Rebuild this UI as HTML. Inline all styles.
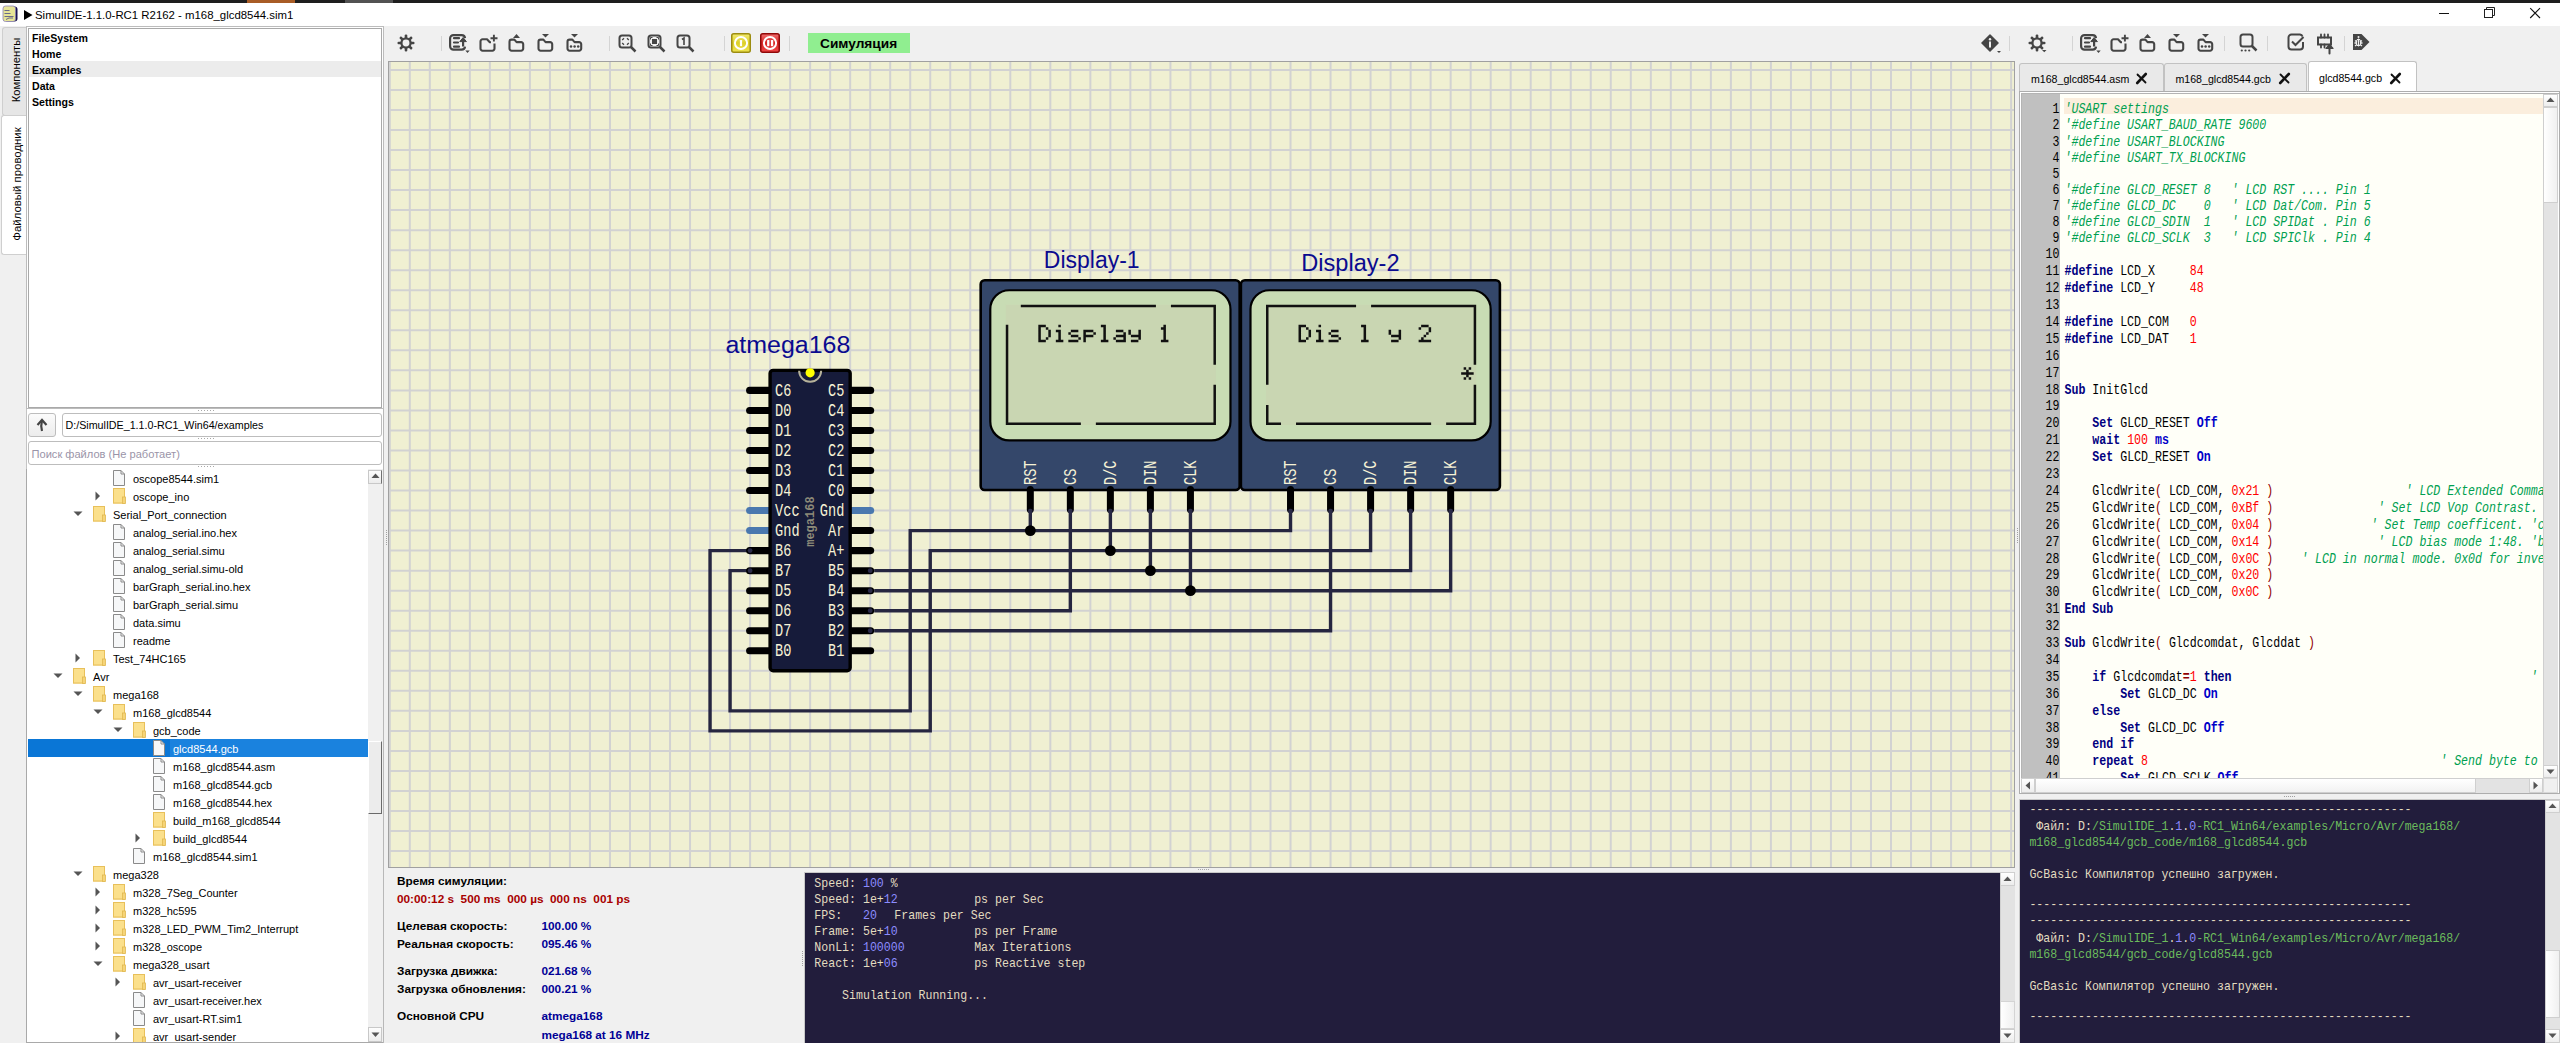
<!DOCTYPE html><html><head><meta charset="utf-8"><title>SimulIDE</title><style>html,body{margin:0;padding:0;width:2560px;height:1043px;overflow:hidden;background:#f0f0f0}body{position:relative}</style></head><body><div style="position:absolute;left:0px;top:0px;width:2560px;height:1043px;background:#f0f0f0"></div>
<div style="position:absolute;left:0px;top:0px;width:2560px;height:3px;background:#1e1e1e"></div>
<div style="position:absolute;left:247px;top:0px;width:48px;height:3px;background:#a85c26"></div>
<div style="position:absolute;left:345px;top:0px;width:48px;height:3px;background:#525252"></div>
<div style="position:absolute;left:0px;top:3px;width:2560px;height:23px;background:#ffffff"></div>
<svg style="position:absolute;left:2px;top:5px" width="17" height="18" viewBox="0 0 17 18"><rect x="3" y="1.5" width="12.5" height="15" rx="3" fill="#1a1450"/><rect x="1" y="1" width="12.5" height="15.5" rx="2.5" fill="#e6e496" stroke="#8a82b8" stroke-width="0.8"/><path d="M2.5 5.5h5M2.5 8.5h6M2.5 11.5h9M4 14.5l3-1.5h4" stroke="#6a6a8a" stroke-width="1" fill="none"/></svg>
<svg style="position:absolute;left:24px;top:10px" width="9" height="11"><path d="M0 0L8.5 5L0 10Z" fill="#000"/></svg>
<div style="position:absolute;left:35px;top:7.80px;height:15px;line-height:15px;font-family:'Liberation Sans', sans-serif;font-size:11.4px;font-weight:400;color:#000;white-space:pre;">SimulIDE-1.1.0-RC1 R2162 - m168_glcd8544.sim1</div>
<svg style="position:absolute;left:2430px;top:6px" width="120" height="16"><path d="M9 7.5h10" stroke="#111" stroke-width="1"/><rect x="54.5" y="3.5" width="8" height="8" fill="none" stroke="#222" stroke-width="1"/><path d="M56.5 3.5v-2h8v8h-2" fill="none" stroke="#222" stroke-width="1"/><path d="M100.2 2.2l9.8 9.8M110 2.2l-9.8 9.8" stroke="#111" stroke-width="1.1"/></svg>
<div style="position:absolute;left:0px;top:26px;width:27px;height:1017px;background:#f0f0f0"></div>
<div style="position:absolute;left:26px;top:26px;width:1px;height:1017px;background:#c4c4c4"></div>
<div style="position:absolute;left:2px;top:27px;width:24px;height:87px;background:#e6e6e6;border:1px solid #cfcfcf;border-right:none;border-radius:3px 0 0 3px"></div>
<div style="position:absolute;left:16px;top:70px;transform:translate(-50%,-50%) rotate(-90deg);font-family:'Liberation Sans', sans-serif;font-size:11.2px;color:#000;white-space:pre">Компоненты</div>
<div style="position:absolute;left:1px;top:115px;width:26px;height:138px;background:#ffffff;border:1px solid #cfcfcf;border-right:none;border-radius:3px 0 0 3px"></div>
<div style="position:absolute;left:17px;top:184px;transform:translate(-50%,-50%) rotate(-90deg);font-family:'Liberation Sans', sans-serif;font-size:11.4px;color:#000;white-space:pre">Файловый проводник</div>
<div style="position:absolute;left:27px;top:26px;width:357px;height:1017px;background:#fff;border-right:1px solid #b8b8b8;box-sizing:border-box"></div>
<div style="position:absolute;left:26px;top:26px;width:358px;height:383px;background:#fff;border:1px solid #bcbcbc;box-sizing:border-box"></div>
<div style="position:absolute;left:28px;top:28px;width:354px;height:380px;background:#fff;border:1px solid #a9a9a9;box-sizing:border-box"></div>
<div style="position:absolute;left:29px;top:61px;width:352px;height:16px;background:#ececec"></div>
<div style="position:absolute;left:32px;top:30.60px;height:14px;line-height:14px;font-family:'Liberation Sans', sans-serif;font-size:10.6px;font-weight:700;color:#000;white-space:pre;">FileSystem</div>
<div style="position:absolute;left:32px;top:46.60px;height:14px;line-height:14px;font-family:'Liberation Sans', sans-serif;font-size:10.6px;font-weight:700;color:#000;white-space:pre;">Home</div>
<div style="position:absolute;left:32px;top:62.60px;height:14px;line-height:14px;font-family:'Liberation Sans', sans-serif;font-size:10.6px;font-weight:700;color:#000;white-space:pre;">Examples</div>
<div style="position:absolute;left:32px;top:78.60px;height:14px;line-height:14px;font-family:'Liberation Sans', sans-serif;font-size:10.6px;font-weight:700;color:#000;white-space:pre;">Data</div>
<div style="position:absolute;left:32px;top:94.60px;height:14px;line-height:14px;font-family:'Liberation Sans', sans-serif;font-size:10.6px;font-weight:700;color:#000;white-space:pre;">Settings</div>
<div style="position:absolute;left:198px;top:410px;width:1px;height:1px;background:#a8a8a8"></div>
<div style="position:absolute;left:201px;top:410px;width:1px;height:1px;background:#a8a8a8"></div>
<div style="position:absolute;left:204px;top:410px;width:1px;height:1px;background:#a8a8a8"></div>
<div style="position:absolute;left:207px;top:410px;width:1px;height:1px;background:#a8a8a8"></div>
<div style="position:absolute;left:210px;top:410px;width:1px;height:1px;background:#a8a8a8"></div>
<div style="position:absolute;left:213px;top:410px;width:1px;height:1px;background:#a8a8a8"></div>
<div style="position:absolute;left:198px;top:438px;width:1px;height:1px;background:#a8a8a8"></div>
<div style="position:absolute;left:201px;top:438px;width:1px;height:1px;background:#a8a8a8"></div>
<div style="position:absolute;left:204px;top:438px;width:1px;height:1px;background:#a8a8a8"></div>
<div style="position:absolute;left:207px;top:438px;width:1px;height:1px;background:#a8a8a8"></div>
<div style="position:absolute;left:210px;top:438px;width:1px;height:1px;background:#a8a8a8"></div>
<div style="position:absolute;left:213px;top:438px;width:1px;height:1px;background:#a8a8a8"></div>
<div style="position:absolute;left:198px;top:466px;width:1px;height:1px;background:#a8a8a8"></div>
<div style="position:absolute;left:201px;top:466px;width:1px;height:1px;background:#a8a8a8"></div>
<div style="position:absolute;left:204px;top:466px;width:1px;height:1px;background:#a8a8a8"></div>
<div style="position:absolute;left:207px;top:466px;width:1px;height:1px;background:#a8a8a8"></div>
<div style="position:absolute;left:210px;top:466px;width:1px;height:1px;background:#a8a8a8"></div>
<div style="position:absolute;left:213px;top:466px;width:1px;height:1px;background:#a8a8a8"></div>
<div style="position:absolute;left:28px;top:413px;width:28px;height:24px;background:linear-gradient(#fbfbfb,#ececec);border:1px solid #bdbdbd;box-sizing:border-box;border-radius:3px"></div>
<svg style="position:absolute;left:35px;top:417px" width="14" height="16"><path d="M7 14 Q5.5 9 7 3.5" stroke="#444" stroke-width="2.2" fill="none"/><path d="M2.5 8L7 3l4.5 5" stroke="#444" stroke-width="2.2" fill="none"/></svg>
<div style="position:absolute;left:62px;top:413px;width:320px;height:24px;background:#fff;border:1px solid #bdbdbd;box-sizing:border-box;border-radius:3px"></div>
<div style="position:absolute;left:65.5px;top:418.30px;height:14px;line-height:14px;font-family:'Liberation Sans', sans-serif;font-size:10.7px;font-weight:400;color:#000;white-space:pre;">D:/SimulIDE_1.1.0-RC1_Win64/examples</div>
<div style="position:absolute;left:28px;top:441px;width:354px;height:24px;background:#fff;border:1px solid #bdbdbd;box-sizing:border-box;border-radius:3px"></div>
<div style="position:absolute;left:31.5px;top:446.50px;height:14px;line-height:14px;font-family:'Liberation Sans', sans-serif;font-size:11.1px;font-weight:400;color:#9a94a8;white-space:pre;">Поиск файлов (Не работает)</div>
<div style="position:absolute;left:26px;top:469px;width:357px;height:574px;background:#fff;border-left:1px solid #a9a9a9;border-bottom:1px solid #a9a9a9;box-sizing:border-box"></div>
<div style="position:absolute;left:27px;top:469px;width:341px;height:573px;overflow:hidden">
<svg style="position:absolute;left:86px;top:1.0px" width="12" height="16"><path d="M0.5 0.5H8L11.5 4V15.5H0.5Z" fill="#f6f7f8" stroke="#8a8a8a" stroke-width="1"/><path d="M8 0.5V4H11.5" fill="none" stroke="#8a8a8a" stroke-width="1"/></svg>
<div style="position:absolute;left:106px;top:3.10px;height:14px;line-height:14px;font-family:'Liberation Sans', sans-serif;font-size:11px;color:#000;white-space:pre">oscope8544.sim1</div>
<svg style="position:absolute;left:68px;top:22.0px" width="6" height="10"><path d="M0.5 0.5L5 5L0.5 9.5Z" fill="#555"/></svg>
<svg style="position:absolute;left:86px;top:19.0px" width="14" height="16"><rect x="0" y="0" width="12" height="15.5" fill="#f2d06a"/><rect x="0.5" y="0.5" width="11" height="14.5" fill="#fbe08c" stroke="#e8c05a" stroke-width="1"/><rect x="9.5" y="9" width="3" height="6.5" fill="#f6d478" stroke="#e0b850" stroke-width="0.8"/></svg>
<div style="position:absolute;left:106px;top:21.10px;height:14px;line-height:14px;font-family:'Liberation Sans', sans-serif;font-size:11px;color:#000;white-space:pre">oscope_ino</div>
<svg style="position:absolute;left:46px;top:42.0px" width="10" height="6"><path d="M0.5 0.5L9.5 0.5L5 5Z" fill="#555"/></svg>
<svg style="position:absolute;left:66px;top:37.0px" width="14" height="16"><rect x="0" y="0" width="12" height="15.5" fill="#f2d06a"/><rect x="0.5" y="0.5" width="11" height="14.5" fill="#fbe08c" stroke="#e8c05a" stroke-width="1"/><rect x="9.5" y="9" width="3" height="6.5" fill="#f6d478" stroke="#e0b850" stroke-width="0.8"/></svg>
<div style="position:absolute;left:86px;top:39.10px;height:14px;line-height:14px;font-family:'Liberation Sans', sans-serif;font-size:11px;color:#000;white-space:pre">Serial_Port_connection</div>
<svg style="position:absolute;left:86px;top:55.0px" width="12" height="16"><path d="M0.5 0.5H8L11.5 4V15.5H0.5Z" fill="#f6f7f8" stroke="#8a8a8a" stroke-width="1"/><path d="M8 0.5V4H11.5" fill="none" stroke="#8a8a8a" stroke-width="1"/></svg>
<div style="position:absolute;left:106px;top:57.10px;height:14px;line-height:14px;font-family:'Liberation Sans', sans-serif;font-size:11px;color:#000;white-space:pre">analog_serial.ino.hex</div>
<svg style="position:absolute;left:86px;top:73.0px" width="12" height="16"><path d="M0.5 0.5H8L11.5 4V15.5H0.5Z" fill="#f6f7f8" stroke="#8a8a8a" stroke-width="1"/><path d="M8 0.5V4H11.5" fill="none" stroke="#8a8a8a" stroke-width="1"/></svg>
<div style="position:absolute;left:106px;top:75.10px;height:14px;line-height:14px;font-family:'Liberation Sans', sans-serif;font-size:11px;color:#000;white-space:pre">analog_serial.simu</div>
<svg style="position:absolute;left:86px;top:91.0px" width="12" height="16"><path d="M0.5 0.5H8L11.5 4V15.5H0.5Z" fill="#f6f7f8" stroke="#8a8a8a" stroke-width="1"/><path d="M8 0.5V4H11.5" fill="none" stroke="#8a8a8a" stroke-width="1"/></svg>
<div style="position:absolute;left:106px;top:93.10px;height:14px;line-height:14px;font-family:'Liberation Sans', sans-serif;font-size:11px;color:#000;white-space:pre">analog_serial.simu-old</div>
<svg style="position:absolute;left:86px;top:109.0px" width="12" height="16"><path d="M0.5 0.5H8L11.5 4V15.5H0.5Z" fill="#f6f7f8" stroke="#8a8a8a" stroke-width="1"/><path d="M8 0.5V4H11.5" fill="none" stroke="#8a8a8a" stroke-width="1"/></svg>
<div style="position:absolute;left:106px;top:111.10px;height:14px;line-height:14px;font-family:'Liberation Sans', sans-serif;font-size:11px;color:#000;white-space:pre">barGraph_serial.ino.hex</div>
<svg style="position:absolute;left:86px;top:127.0px" width="12" height="16"><path d="M0.5 0.5H8L11.5 4V15.5H0.5Z" fill="#f6f7f8" stroke="#8a8a8a" stroke-width="1"/><path d="M8 0.5V4H11.5" fill="none" stroke="#8a8a8a" stroke-width="1"/></svg>
<div style="position:absolute;left:106px;top:129.10px;height:14px;line-height:14px;font-family:'Liberation Sans', sans-serif;font-size:11px;color:#000;white-space:pre">barGraph_serial.simu</div>
<svg style="position:absolute;left:86px;top:145.0px" width="12" height="16"><path d="M0.5 0.5H8L11.5 4V15.5H0.5Z" fill="#f6f7f8" stroke="#8a8a8a" stroke-width="1"/><path d="M8 0.5V4H11.5" fill="none" stroke="#8a8a8a" stroke-width="1"/></svg>
<div style="position:absolute;left:106px;top:147.10px;height:14px;line-height:14px;font-family:'Liberation Sans', sans-serif;font-size:11px;color:#000;white-space:pre">data.simu</div>
<svg style="position:absolute;left:86px;top:163.0px" width="12" height="16"><path d="M0.5 0.5H8L11.5 4V15.5H0.5Z" fill="#f6f7f8" stroke="#8a8a8a" stroke-width="1"/><path d="M8 0.5V4H11.5" fill="none" stroke="#8a8a8a" stroke-width="1"/></svg>
<div style="position:absolute;left:106px;top:165.10px;height:14px;line-height:14px;font-family:'Liberation Sans', sans-serif;font-size:11px;color:#000;white-space:pre">readme</div>
<svg style="position:absolute;left:48px;top:184.0px" width="6" height="10"><path d="M0.5 0.5L5 5L0.5 9.5Z" fill="#555"/></svg>
<svg style="position:absolute;left:66px;top:181.0px" width="14" height="16"><rect x="0" y="0" width="12" height="15.5" fill="#f2d06a"/><rect x="0.5" y="0.5" width="11" height="14.5" fill="#fbe08c" stroke="#e8c05a" stroke-width="1"/><rect x="9.5" y="9" width="3" height="6.5" fill="#f6d478" stroke="#e0b850" stroke-width="0.8"/></svg>
<div style="position:absolute;left:86px;top:183.10px;height:14px;line-height:14px;font-family:'Liberation Sans', sans-serif;font-size:11px;color:#000;white-space:pre">Test_74HC165</div>
<svg style="position:absolute;left:26px;top:204.0px" width="10" height="6"><path d="M0.5 0.5L9.5 0.5L5 5Z" fill="#555"/></svg>
<svg style="position:absolute;left:46px;top:199.0px" width="14" height="16"><rect x="0" y="0" width="12" height="15.5" fill="#f2d06a"/><rect x="0.5" y="0.5" width="11" height="14.5" fill="#fbe08c" stroke="#e8c05a" stroke-width="1"/><rect x="9.5" y="9" width="3" height="6.5" fill="#f6d478" stroke="#e0b850" stroke-width="0.8"/></svg>
<div style="position:absolute;left:66px;top:201.10px;height:14px;line-height:14px;font-family:'Liberation Sans', sans-serif;font-size:11px;color:#000;white-space:pre">Avr</div>
<svg style="position:absolute;left:46px;top:222.0px" width="10" height="6"><path d="M0.5 0.5L9.5 0.5L5 5Z" fill="#555"/></svg>
<svg style="position:absolute;left:66px;top:217.0px" width="14" height="16"><rect x="0" y="0" width="12" height="15.5" fill="#f2d06a"/><rect x="0.5" y="0.5" width="11" height="14.5" fill="#fbe08c" stroke="#e8c05a" stroke-width="1"/><rect x="9.5" y="9" width="3" height="6.5" fill="#f6d478" stroke="#e0b850" stroke-width="0.8"/></svg>
<div style="position:absolute;left:86px;top:219.10px;height:14px;line-height:14px;font-family:'Liberation Sans', sans-serif;font-size:11px;color:#000;white-space:pre">mega168</div>
<svg style="position:absolute;left:66px;top:240.0px" width="10" height="6"><path d="M0.5 0.5L9.5 0.5L5 5Z" fill="#555"/></svg>
<svg style="position:absolute;left:86px;top:235.0px" width="14" height="16"><rect x="0" y="0" width="12" height="15.5" fill="#f2d06a"/><rect x="0.5" y="0.5" width="11" height="14.5" fill="#fbe08c" stroke="#e8c05a" stroke-width="1"/><rect x="9.5" y="9" width="3" height="6.5" fill="#f6d478" stroke="#e0b850" stroke-width="0.8"/></svg>
<div style="position:absolute;left:106px;top:237.10px;height:14px;line-height:14px;font-family:'Liberation Sans', sans-serif;font-size:11px;color:#000;white-space:pre">m168_glcd8544</div>
<svg style="position:absolute;left:86px;top:258.0px" width="10" height="6"><path d="M0.5 0.5L9.5 0.5L5 5Z" fill="#555"/></svg>
<svg style="position:absolute;left:106px;top:253.0px" width="14" height="16"><rect x="0" y="0" width="12" height="15.5" fill="#f2d06a"/><rect x="0.5" y="0.5" width="11" height="14.5" fill="#fbe08c" stroke="#e8c05a" stroke-width="1"/><rect x="9.5" y="9" width="3" height="6.5" fill="#f6d478" stroke="#e0b850" stroke-width="0.8"/></svg>
<div style="position:absolute;left:126px;top:255.10px;height:14px;line-height:14px;font-family:'Liberation Sans', sans-serif;font-size:11px;color:#000;white-space:pre">gcb_code</div>
<div style="position:absolute;left:1px;top:270.0px;width:340px;height:18px;background:#0a76d6"></div>
<div style="position:absolute;left:143px;top:270.0px;width:198px;height:18px;background:#1a82de"></div>
<svg style="position:absolute;left:126px;top:271.0px" width="12" height="16"><path d="M0.5 0.5H8L11.5 4V15.5H0.5Z" fill="#f6f7f8" stroke="#8a8a8a" stroke-width="1"/><path d="M8 0.5V4H11.5" fill="none" stroke="#8a8a8a" stroke-width="1"/></svg>
<div style="position:absolute;left:146px;top:273.10px;height:14px;line-height:14px;font-family:'Liberation Sans', sans-serif;font-size:11px;color:#fff;white-space:pre">glcd8544.gcb</div>
<svg style="position:absolute;left:126px;top:289.0px" width="12" height="16"><path d="M0.5 0.5H8L11.5 4V15.5H0.5Z" fill="#f6f7f8" stroke="#8a8a8a" stroke-width="1"/><path d="M8 0.5V4H11.5" fill="none" stroke="#8a8a8a" stroke-width="1"/></svg>
<div style="position:absolute;left:146px;top:291.10px;height:14px;line-height:14px;font-family:'Liberation Sans', sans-serif;font-size:11px;color:#000;white-space:pre">m168_glcd8544.asm</div>
<svg style="position:absolute;left:126px;top:307.0px" width="12" height="16"><path d="M0.5 0.5H8L11.5 4V15.5H0.5Z" fill="#f6f7f8" stroke="#8a8a8a" stroke-width="1"/><path d="M8 0.5V4H11.5" fill="none" stroke="#8a8a8a" stroke-width="1"/></svg>
<div style="position:absolute;left:146px;top:309.10px;height:14px;line-height:14px;font-family:'Liberation Sans', sans-serif;font-size:11px;color:#000;white-space:pre">m168_glcd8544.gcb</div>
<svg style="position:absolute;left:126px;top:325.0px" width="12" height="16"><path d="M0.5 0.5H8L11.5 4V15.5H0.5Z" fill="#f6f7f8" stroke="#8a8a8a" stroke-width="1"/><path d="M8 0.5V4H11.5" fill="none" stroke="#8a8a8a" stroke-width="1"/></svg>
<div style="position:absolute;left:146px;top:327.10px;height:14px;line-height:14px;font-family:'Liberation Sans', sans-serif;font-size:11px;color:#000;white-space:pre">m168_glcd8544.hex</div>
<svg style="position:absolute;left:126px;top:343.0px" width="14" height="16"><rect x="0" y="0" width="12" height="15.5" fill="#f2d06a"/><rect x="0.5" y="0.5" width="11" height="14.5" fill="#fbe08c" stroke="#e8c05a" stroke-width="1"/><rect x="9.5" y="9" width="3" height="6.5" fill="#f6d478" stroke="#e0b850" stroke-width="0.8"/></svg>
<div style="position:absolute;left:146px;top:345.10px;height:14px;line-height:14px;font-family:'Liberation Sans', sans-serif;font-size:11px;color:#000;white-space:pre">build_m168_glcd8544</div>
<svg style="position:absolute;left:108px;top:364.0px" width="6" height="10"><path d="M0.5 0.5L5 5L0.5 9.5Z" fill="#555"/></svg>
<svg style="position:absolute;left:126px;top:361.0px" width="14" height="16"><rect x="0" y="0" width="12" height="15.5" fill="#f2d06a"/><rect x="0.5" y="0.5" width="11" height="14.5" fill="#fbe08c" stroke="#e8c05a" stroke-width="1"/><rect x="9.5" y="9" width="3" height="6.5" fill="#f6d478" stroke="#e0b850" stroke-width="0.8"/></svg>
<div style="position:absolute;left:146px;top:363.10px;height:14px;line-height:14px;font-family:'Liberation Sans', sans-serif;font-size:11px;color:#000;white-space:pre">build_glcd8544</div>
<svg style="position:absolute;left:106px;top:379.0px" width="12" height="16"><path d="M0.5 0.5H8L11.5 4V15.5H0.5Z" fill="#f6f7f8" stroke="#8a8a8a" stroke-width="1"/><path d="M8 0.5V4H11.5" fill="none" stroke="#8a8a8a" stroke-width="1"/></svg>
<div style="position:absolute;left:126px;top:381.10px;height:14px;line-height:14px;font-family:'Liberation Sans', sans-serif;font-size:11px;color:#000;white-space:pre">m168_glcd8544.sim1</div>
<svg style="position:absolute;left:46px;top:402.0px" width="10" height="6"><path d="M0.5 0.5L9.5 0.5L5 5Z" fill="#555"/></svg>
<svg style="position:absolute;left:66px;top:397.0px" width="14" height="16"><rect x="0" y="0" width="12" height="15.5" fill="#f2d06a"/><rect x="0.5" y="0.5" width="11" height="14.5" fill="#fbe08c" stroke="#e8c05a" stroke-width="1"/><rect x="9.5" y="9" width="3" height="6.5" fill="#f6d478" stroke="#e0b850" stroke-width="0.8"/></svg>
<div style="position:absolute;left:86px;top:399.10px;height:14px;line-height:14px;font-family:'Liberation Sans', sans-serif;font-size:11px;color:#000;white-space:pre">mega328</div>
<svg style="position:absolute;left:68px;top:418.0px" width="6" height="10"><path d="M0.5 0.5L5 5L0.5 9.5Z" fill="#555"/></svg>
<svg style="position:absolute;left:86px;top:415.0px" width="14" height="16"><rect x="0" y="0" width="12" height="15.5" fill="#f2d06a"/><rect x="0.5" y="0.5" width="11" height="14.5" fill="#fbe08c" stroke="#e8c05a" stroke-width="1"/><rect x="9.5" y="9" width="3" height="6.5" fill="#f6d478" stroke="#e0b850" stroke-width="0.8"/></svg>
<div style="position:absolute;left:106px;top:417.10px;height:14px;line-height:14px;font-family:'Liberation Sans', sans-serif;font-size:11px;color:#000;white-space:pre">m328_7Seg_Counter</div>
<svg style="position:absolute;left:68px;top:436.0px" width="6" height="10"><path d="M0.5 0.5L5 5L0.5 9.5Z" fill="#555"/></svg>
<svg style="position:absolute;left:86px;top:433.0px" width="14" height="16"><rect x="0" y="0" width="12" height="15.5" fill="#f2d06a"/><rect x="0.5" y="0.5" width="11" height="14.5" fill="#fbe08c" stroke="#e8c05a" stroke-width="1"/><rect x="9.5" y="9" width="3" height="6.5" fill="#f6d478" stroke="#e0b850" stroke-width="0.8"/></svg>
<div style="position:absolute;left:106px;top:435.10px;height:14px;line-height:14px;font-family:'Liberation Sans', sans-serif;font-size:11px;color:#000;white-space:pre">m328_hc595</div>
<svg style="position:absolute;left:68px;top:454.0px" width="6" height="10"><path d="M0.5 0.5L5 5L0.5 9.5Z" fill="#555"/></svg>
<svg style="position:absolute;left:86px;top:451.0px" width="14" height="16"><rect x="0" y="0" width="12" height="15.5" fill="#f2d06a"/><rect x="0.5" y="0.5" width="11" height="14.5" fill="#fbe08c" stroke="#e8c05a" stroke-width="1"/><rect x="9.5" y="9" width="3" height="6.5" fill="#f6d478" stroke="#e0b850" stroke-width="0.8"/></svg>
<div style="position:absolute;left:106px;top:453.10px;height:14px;line-height:14px;font-family:'Liberation Sans', sans-serif;font-size:11px;color:#000;white-space:pre">m328_LED_PWM_Tim2_Interrupt</div>
<svg style="position:absolute;left:68px;top:472.0px" width="6" height="10"><path d="M0.5 0.5L5 5L0.5 9.5Z" fill="#555"/></svg>
<svg style="position:absolute;left:86px;top:469.0px" width="14" height="16"><rect x="0" y="0" width="12" height="15.5" fill="#f2d06a"/><rect x="0.5" y="0.5" width="11" height="14.5" fill="#fbe08c" stroke="#e8c05a" stroke-width="1"/><rect x="9.5" y="9" width="3" height="6.5" fill="#f6d478" stroke="#e0b850" stroke-width="0.8"/></svg>
<div style="position:absolute;left:106px;top:471.10px;height:14px;line-height:14px;font-family:'Liberation Sans', sans-serif;font-size:11px;color:#000;white-space:pre">m328_oscope</div>
<svg style="position:absolute;left:66px;top:492.0px" width="10" height="6"><path d="M0.5 0.5L9.5 0.5L5 5Z" fill="#555"/></svg>
<svg style="position:absolute;left:86px;top:487.0px" width="14" height="16"><rect x="0" y="0" width="12" height="15.5" fill="#f2d06a"/><rect x="0.5" y="0.5" width="11" height="14.5" fill="#fbe08c" stroke="#e8c05a" stroke-width="1"/><rect x="9.5" y="9" width="3" height="6.5" fill="#f6d478" stroke="#e0b850" stroke-width="0.8"/></svg>
<div style="position:absolute;left:106px;top:489.10px;height:14px;line-height:14px;font-family:'Liberation Sans', sans-serif;font-size:11px;color:#000;white-space:pre">mega328_usart</div>
<svg style="position:absolute;left:88px;top:508.0px" width="6" height="10"><path d="M0.5 0.5L5 5L0.5 9.5Z" fill="#555"/></svg>
<svg style="position:absolute;left:106px;top:505.0px" width="14" height="16"><rect x="0" y="0" width="12" height="15.5" fill="#f2d06a"/><rect x="0.5" y="0.5" width="11" height="14.5" fill="#fbe08c" stroke="#e8c05a" stroke-width="1"/><rect x="9.5" y="9" width="3" height="6.5" fill="#f6d478" stroke="#e0b850" stroke-width="0.8"/></svg>
<div style="position:absolute;left:126px;top:507.10px;height:14px;line-height:14px;font-family:'Liberation Sans', sans-serif;font-size:11px;color:#000;white-space:pre">avr_usart-receiver</div>
<svg style="position:absolute;left:106px;top:523.0px" width="12" height="16"><path d="M0.5 0.5H8L11.5 4V15.5H0.5Z" fill="#f6f7f8" stroke="#8a8a8a" stroke-width="1"/><path d="M8 0.5V4H11.5" fill="none" stroke="#8a8a8a" stroke-width="1"/></svg>
<div style="position:absolute;left:126px;top:525.10px;height:14px;line-height:14px;font-family:'Liberation Sans', sans-serif;font-size:11px;color:#000;white-space:pre">avr_usart-receiver.hex</div>
<svg style="position:absolute;left:106px;top:541.0px" width="12" height="16"><path d="M0.5 0.5H8L11.5 4V15.5H0.5Z" fill="#f6f7f8" stroke="#8a8a8a" stroke-width="1"/><path d="M8 0.5V4H11.5" fill="none" stroke="#8a8a8a" stroke-width="1"/></svg>
<div style="position:absolute;left:126px;top:543.10px;height:14px;line-height:14px;font-family:'Liberation Sans', sans-serif;font-size:11px;color:#000;white-space:pre">avr_usart-RT.sim1</div>
<svg style="position:absolute;left:88px;top:562.0px" width="6" height="10"><path d="M0.5 0.5L5 5L0.5 9.5Z" fill="#555"/></svg>
<svg style="position:absolute;left:106px;top:559.0px" width="14" height="16"><rect x="0" y="0" width="12" height="15.5" fill="#f2d06a"/><rect x="0.5" y="0.5" width="11" height="14.5" fill="#fbe08c" stroke="#e8c05a" stroke-width="1"/><rect x="9.5" y="9" width="3" height="6.5" fill="#f6d478" stroke="#e0b850" stroke-width="0.8"/></svg>
<div style="position:absolute;left:126px;top:561.10px;height:14px;line-height:14px;font-family:'Liberation Sans', sans-serif;font-size:11px;color:#000;white-space:pre">avr_usart-sender</div>
</div>
<div style="position:absolute;left:368px;top:469px;width:15px;height:573px;background:#f0f0f0"></div>
<div style="position:absolute;left:368px;top:470px;width:14px;height:14px;background:linear-gradient(#fdfdfd,#ececec);border:1px solid #c8c8c8;border-right-color:#707070;box-sizing:border-box"></div>
<svg style="position:absolute;left:371px;top:473px" width="9" height="6"><path d="M0.5 5L4.5 0.5L8.5 5Z" fill="#555"/></svg>
<div style="position:absolute;left:368px;top:741px;width:14px;height:73px;background:#ececec;border-top:1px solid #fff;border-left:1px solid #fff;border-right:1px solid #6a6a6a;border-bottom:1px solid #6a6a6a;box-sizing:border-box"></div>
<div style="position:absolute;left:368px;top:1027px;width:14px;height:15px;background:linear-gradient(#fdfdfd,#ececec);border:1px solid #c8c8c8;box-sizing:border-box"></div>
<svg style="position:absolute;left:371px;top:1032px" width="9" height="6"><path d="M0.5 0.5L4.5 5L8.5 0.5Z" fill="#555"/></svg>
<div style="position:absolute;left:384px;top:26px;width:3px;height:1017px;background:#f0f0f0"></div>
<svg style="position:absolute;left:396.4px;top:33.2px" width="21" height="21" viewBox="0 0 21 21"><g transform="translate(10,10)"><rect x="-1.3" y="-8.5" width="2.6" height="4.2" rx="1.1" fill="#454545" transform="rotate(0)"/><rect x="-1.3" y="-8.5" width="2.6" height="4.2" rx="1.1" fill="#454545" transform="rotate(45)"/><rect x="-1.3" y="-8.5" width="2.6" height="4.2" rx="1.1" fill="#454545" transform="rotate(90)"/><rect x="-1.3" y="-8.5" width="2.6" height="4.2" rx="1.1" fill="#454545" transform="rotate(135)"/><rect x="-1.3" y="-8.5" width="2.6" height="4.2" rx="1.1" fill="#454545" transform="rotate(180)"/><rect x="-1.3" y="-8.5" width="2.6" height="4.2" rx="1.1" fill="#454545" transform="rotate(225)"/><rect x="-1.3" y="-8.5" width="2.6" height="4.2" rx="1.1" fill="#454545" transform="rotate(270)"/><rect x="-1.3" y="-8.5" width="2.6" height="4.2" rx="1.1" fill="#454545" transform="rotate(315)"/><circle r="4.6" fill="none" stroke="#454545" stroke-width="2.3"/></g></svg>
<div style="position:absolute;left:441px;top:36px;width:1px;height:15px;background:#d4d4d4"></div>
<svg style="position:absolute;left:449px;top:34px" width="21" height="21" viewBox="0 0 21 21"><path d="M16 4.2 A3.4 3.4 0 0 0 12.6 1.1 H4.5 A3.4 3.4 0 0 0 1.1 4.5 V12.3 A3.4 3.4 0 0 0 4.5 15.7 H12.6 A3.4 3.4 0 0 0 16 12.6" fill="none" stroke="#454545" stroke-width="2.2"/><path d="M5 4.2h5M5 8.5h4M5 12.7h5" stroke="#454545" stroke-width="2.2" stroke-linecap="round"/><path d="M14.1 12.5V6.5" stroke="#454545" stroke-width="2.2"/><path d="M10.8 7.6L14.1 3.6L17.4 7.6Z" fill="#454545" stroke="#454545" stroke-width="1" stroke-linejoin="round"/><path d="M16.3 16.6h4.4l-2.2 2.4z" fill="#454545"/></svg>
<svg style="position:absolute;left:478.5px;top:33px" width="20" height="20" viewBox="0 0 20 20"><path d="M12 9.2 H10.8 L8 6.3 H3.6 a2.1 2.1 0 0 0 -2.1 2.1 V15.6 a2.1 2.1 0 0 0 2.1 2.1 H13.4 a2.1 2.1 0 0 0 2.1-2.1 V10.6" fill="none" stroke="#454545" stroke-width="2.1" stroke-linejoin="round"/><path d="M14.9 1.8V8.6M11.5 5.3h7" stroke="#454545" stroke-width="1.9"/></svg>
<svg style="position:absolute;left:507.5px;top:33px" width="18" height="20" viewBox="0 0 18 20"><path d="M1.5 8.7 a2.1 2.1 0 0 1 2.1-2.1 H6.4 L8.6 9.1 H13.1 a2.1 2.1 0 0 1 2.1 2.1 V15.6 a2.1 2.1 0 0 1 -2.1 2.1 H3.6 a2.1 2.1 0 0 1 -2.1-2.1Z" fill="none" stroke="#454545" stroke-width="2.1" stroke-linejoin="round"/><path d="M5 5L8.5 1L12 5Z" fill="#454545"/></svg>
<svg style="position:absolute;left:536.5px;top:33px" width="18" height="20" viewBox="0 0 18 20"><path d="M1.5 8.7 a2.1 2.1 0 0 1 2.1-2.1 H6.4 L8.6 9.1 H13.1 a2.1 2.1 0 0 1 2.1 2.1 V15.6 a2.1 2.1 0 0 1 -2.1 2.1 H3.6 a2.1 2.1 0 0 1 -2.1-2.1Z" fill="none" stroke="#454545" stroke-width="2.1" stroke-linejoin="round"/><path d="M5 1h7L8.5 4.5Z" fill="#454545"/></svg>
<svg style="position:absolute;left:565.5px;top:33px" width="18" height="20" viewBox="0 0 18 20"><path d="M1.5 8.7 a2.1 2.1 0 0 1 2.1-2.1 H6.4 L8.6 9.1 H13.1 a2.1 2.1 0 0 1 2.1 2.1 V15.6 a2.1 2.1 0 0 1 -2.1 2.1 H3.6 a2.1 2.1 0 0 1 -2.1-2.1Z" fill="none" stroke="#454545" stroke-width="2.1" stroke-linejoin="round"/><path d="M5 1h7L8.5 4.5Z" fill="#454545"/><circle cx="5" cy="13.5" r="1.25" fill="#454545"/><circle cx="8.6" cy="13.5" r="1.25" fill="#454545"/><circle cx="12.2" cy="13.5" r="1.25" fill="#454545"/></svg>
<div style="position:absolute;left:609px;top:36px;width:1px;height:15px;background:#d4d4d4"></div>
<svg style="position:absolute;left:618px;top:34px" width="19" height="19" viewBox="0 0 19 19"><rect x="1.5" y="1.5" width="12" height="12" rx="2.5" fill="none" stroke="#454545" stroke-width="2"/><path d="M13 13L17.5 17.5" stroke="#454545" stroke-width="2.5"/><path d="M6 4.2L4.2 6M4.2 9L6 10.8M9 4.2L10.8 6M10.8 9L9 10.8" fill="none" stroke="#454545" stroke-width="1.3"/></svg>
<svg style="position:absolute;left:647px;top:34px" width="19" height="19" viewBox="0 0 19 19"><rect x="1.5" y="1.5" width="12" height="12" rx="2.5" fill="none" stroke="#454545" stroke-width="2"/><path d="M13 13L17.5 17.5" stroke="#454545" stroke-width="2.5"/><rect x="5" y="5" width="5" height="5" fill="#454545"/><path d="M3.5 5.5v-2h2M9.5 3.5h2v2M11.5 9.5v2h-2M5.5 11.5h-2v-2" fill="none" stroke="#454545" stroke-width="1"/></svg>
<svg style="position:absolute;left:676px;top:34px" width="19" height="19" viewBox="0 0 19 19"><rect x="1.5" y="1.5" width="12" height="12" rx="2.5" fill="none" stroke="#454545" stroke-width="2"/><path d="M13 13L17.5 17.5" stroke="#454545" stroke-width="2.5"/><path d="M6 5.5L8 4V11" fill="none" stroke="#454545" stroke-width="1.6"/></svg>
<div style="position:absolute;left:724px;top:36px;width:1px;height:15px;background:#d4d4d4"></div>
<svg style="position:absolute;left:731px;top:33px" width="21" height="21" viewBox="0 0 21 21"><defs><linearGradient id="gy" x1="0" y1="0" x2="0" y2="1"><stop offset="0" stop-color="#f2ea70"/><stop offset="0.5" stop-color="#dccf2a"/><stop offset="1" stop-color="#efe450"/></linearGradient></defs><rect x="0.75" y="0.75" width="18.5" height="18.5" rx="2" fill="url(#gy)" stroke="#9c8c10" stroke-width="1.5"/><circle cx="10" cy="10" r="6.1" fill="none" stroke="#fff" stroke-width="2"/><rect x="8.9" y="7" width="2.2" height="6.2" rx="0.6" fill="#fff"/></svg>
<svg style="position:absolute;left:760px;top:33px" width="21" height="21" viewBox="0 0 21 21"><defs><linearGradient id="gr" x1="0" y1="0" x2="0" y2="1"><stop offset="0" stop-color="#f07070"/><stop offset="0.5" stop-color="#d82424"/><stop offset="1" stop-color="#f04848"/></linearGradient></defs><rect x="0.75" y="0.75" width="18.5" height="18.5" rx="2" fill="url(#gr)" stroke="#900808" stroke-width="1.5"/><circle cx="10" cy="10" r="6.1" fill="none" stroke="#fff" stroke-width="2"/><rect x="7.1" y="7" width="2.3" height="6.2" rx="0.6" fill="#fff"/><rect x="10.9" y="7" width="2.3" height="6.2" rx="0.6" fill="#fff"/></svg>
<div style="position:absolute;left:789px;top:36px;width:1px;height:15px;background:#d4d4d4"></div>
<div style="position:absolute;left:808px;top:33px;width:102px;height:20px;background:#90ee90"></div>
<div style="position:absolute;left:820px;top:34.90px;height:18px;line-height:18px;font-family:'Liberation Sans', sans-serif;font-size:13.7px;font-weight:700;color:#000;white-space:pre;">Симуляция</div>
<div style="position:absolute;left:388px;top:61px;width:1627px;height:807px;background:#a0a0a0"></div>
<svg style="position:absolute;left:389px;top:62px;background:#f0f0d2" width="1625" height="805"><g transform="translate(-389,0)"><path d="M389.80 0V805M409.82 0V805M429.83 0V805M449.85 0V805M469.86 0V805M489.88 0V805M509.90 0V805M529.91 0V805M549.93 0V805M569.94 0V805M589.96 0V805M609.98 0V805M629.99 0V805M650.01 0V805M670.02 0V805M690.04 0V805M710.06 0V805M730.07 0V805M750.09 0V805M770.10 0V805M790.12 0V805M810.14 0V805M830.15 0V805M850.17 0V805M870.18 0V805M890.20 0V805M910.22 0V805M930.23 0V805M950.25 0V805M970.26 0V805M990.28 0V805M1010.30 0V805M1030.31 0V805M1050.33 0V805M1070.34 0V805M1090.36 0V805M1110.38 0V805M1130.39 0V805M1150.41 0V805M1170.42 0V805M1190.44 0V805M1210.46 0V805M1230.47 0V805M1250.49 0V805M1270.50 0V805M1290.52 0V805M1310.54 0V805M1330.55 0V805M1350.57 0V805M1370.58 0V805M1390.60 0V805M1410.62 0V805M1430.63 0V805M1450.65 0V805M1470.66 0V805M1490.68 0V805M1510.70 0V805M1530.71 0V805M1550.73 0V805M1570.74 0V805M1590.76 0V805M1610.78 0V805M1630.79 0V805M1650.81 0V805M1670.82 0V805M1690.84 0V805M1710.86 0V805M1730.87 0V805M1750.89 0V805M1770.90 0V805M1790.92 0V805M1810.94 0V805M1830.95 0V805M1850.97 0V805M1870.98 0V805M1891.00 0V805M1911.02 0V805M1931.03 0V805M1951.05 0V805M1971.06 0V805M1991.08 0V805M2011.10 0V805" stroke="#d2d2d2" stroke-width="2"/></g><path d="M0 7.90H1625M0 27.93H1625M0 47.96H1625M0 67.99H1625M0 88.02H1625M0 108.05H1625M0 128.08H1625M0 148.11H1625M0 168.14H1625M0 188.17H1625M0 208.20H1625M0 228.23H1625M0 248.26H1625M0 268.29H1625M0 288.32H1625M0 308.35H1625M0 328.38H1625M0 348.41H1625M0 368.44H1625M0 388.47H1625M0 408.50H1625M0 428.53H1625M0 448.56H1625M0 468.59H1625M0 488.62H1625M0 508.65H1625M0 528.68H1625M0 548.71H1625M0 568.74H1625M0 588.77H1625M0 608.80H1625M0 628.83H1625M0 648.86H1625M0 668.89H1625M0 688.92H1625M0 708.95H1625M0 728.98H1625M0 749.01H1625M0 769.04H1625M0 789.07H1625M0 809.10H1625" stroke="#d2d2d2" stroke-width="2"/></svg>
<svg style="position:absolute;left:0;top:0" width="2560" height="1043" viewBox="0 0 2560 1043"><g transform="translate(389.8,69.9) scale(1.0008,1.0015) translate(-390,-70)"><path d="M770 570 L730 570 L730 710 L910 710 L910 530 L1290 530 L1290 510" fill="none" stroke="#262640" stroke-width="3.4" stroke-linejoin="miter" stroke-linecap="butt"/><path d="M770 550 L710 550 L710 730 L930 730 L930 550 L1370 550 L1370 510" fill="none" stroke="#262640" stroke-width="3.4" stroke-linejoin="miter" stroke-linecap="butt"/><path d="M874 570 L1410 570 L1410 510" fill="none" stroke="#262640" stroke-width="3.4" stroke-linejoin="miter" stroke-linecap="butt"/><path d="M874 590 L1450 590 L1450 510" fill="none" stroke="#262640" stroke-width="3.4" stroke-linejoin="miter" stroke-linecap="butt"/><path d="M874 610 L1070 610 L1070 510" fill="none" stroke="#262640" stroke-width="3.4" stroke-linejoin="miter" stroke-linecap="butt"/><path d="M874 630 L1330 630 L1330 510" fill="none" stroke="#262640" stroke-width="3.4" stroke-linejoin="miter" stroke-linecap="butt"/><path d="M1030 530 L1030 510" fill="none" stroke="#262640" stroke-width="3.4" stroke-linejoin="miter" stroke-linecap="butt"/><path d="M1110 550 L1110 510" fill="none" stroke="#262640" stroke-width="3.4" stroke-linejoin="miter" stroke-linecap="butt"/><path d="M1150 570 L1150 510" fill="none" stroke="#262640" stroke-width="3.4" stroke-linejoin="miter" stroke-linecap="butt"/><path d="M1190 590 L1190 510" fill="none" stroke="#262640" stroke-width="3.4" stroke-linejoin="miter" stroke-linecap="butt"/><circle cx="1030" cy="530" r="5.4" fill="#000"/><circle cx="1110" cy="550" r="5.4" fill="#000"/><circle cx="1150" cy="570" r="5.4" fill="#000"/><circle cx="1190" cy="590" r="5.4" fill="#000"/><path d="M749.5 390 H772" stroke="#000" stroke-width="7" stroke-linecap="round"/><path d="M848 390 H870.5" stroke="#000" stroke-width="7" stroke-linecap="round"/><path d="M749.5 410 H772" stroke="#000" stroke-width="7" stroke-linecap="round"/><path d="M848 410 H870.5" stroke="#000" stroke-width="7" stroke-linecap="round"/><path d="M749.5 430 H772" stroke="#000" stroke-width="7" stroke-linecap="round"/><path d="M848 430 H870.5" stroke="#000" stroke-width="7" stroke-linecap="round"/><path d="M749.5 450 H772" stroke="#000" stroke-width="7" stroke-linecap="round"/><path d="M848 450 H870.5" stroke="#000" stroke-width="7" stroke-linecap="round"/><path d="M749.5 470 H772" stroke="#000" stroke-width="7" stroke-linecap="round"/><path d="M848 470 H870.5" stroke="#000" stroke-width="7" stroke-linecap="round"/><path d="M749.5 490 H772" stroke="#000" stroke-width="7" stroke-linecap="round"/><path d="M848 490 H870.5" stroke="#000" stroke-width="7" stroke-linecap="round"/><path d="M749.5 510 H772" stroke="#4a78ae" stroke-width="7" stroke-linecap="round"/><path d="M848 510 H870.5" stroke="#4a78ae" stroke-width="7" stroke-linecap="round"/><path d="M749.5 530 H772" stroke="#4a78ae" stroke-width="7" stroke-linecap="round"/><path d="M848 530 H870.5" stroke="#000" stroke-width="7" stroke-linecap="round"/><path d="M749.5 550 H772" stroke="#000" stroke-width="7" stroke-linecap="round"/><path d="M848 550 H870.5" stroke="#000" stroke-width="7" stroke-linecap="round"/><path d="M749.5 570 H772" stroke="#000" stroke-width="7" stroke-linecap="round"/><path d="M848 570 H870.5" stroke="#000" stroke-width="7" stroke-linecap="round"/><path d="M749.5 590 H772" stroke="#000" stroke-width="7" stroke-linecap="round"/><path d="M848 590 H870.5" stroke="#000" stroke-width="7" stroke-linecap="round"/><path d="M749.5 610 H772" stroke="#000" stroke-width="7" stroke-linecap="round"/><path d="M848 610 H870.5" stroke="#000" stroke-width="7" stroke-linecap="round"/><path d="M749.5 630 H772" stroke="#000" stroke-width="7" stroke-linecap="round"/><path d="M848 630 H870.5" stroke="#000" stroke-width="7" stroke-linecap="round"/><path d="M749.5 650 H772" stroke="#000" stroke-width="7" stroke-linecap="round"/><path d="M848 650 H870.5" stroke="#000" stroke-width="7" stroke-linecap="round"/><circle cx="750" cy="550" r="2.4" fill="#2a2a48"/><circle cx="750" cy="570" r="2.4" fill="#2a2a48"/><circle cx="870" cy="570" r="2.4" fill="#2a2a48"/><circle cx="870" cy="590" r="2.4" fill="#2a2a48"/><circle cx="870" cy="610" r="2.4" fill="#2a2a48"/><circle cx="870" cy="630" r="2.4" fill="#2a2a48"/><rect x="770" y="370" width="80" height="300" rx="3" fill="#161b3a" stroke="#000" stroke-width="3.4"/><path d="M799 370.5 A11 11 0 0 0 821 370.5" fill="none" stroke="#b6b29a" stroke-width="2"/><circle cx="810" cy="372.5" r="4.6" fill="#ffff00"/><text transform="translate(775,395.2) scale(1,1.3)" style="font-family:'Liberation Mono',monospace;font-size:13.6px" fill="#f6f2d6">C6</text><text transform="translate(844.2,395.2) scale(1,1.3)" text-anchor="end" style="font-family:'Liberation Mono',monospace;font-size:13.6px" fill="#f6f2d6">C5</text><text transform="translate(775,415.2) scale(1,1.3)" style="font-family:'Liberation Mono',monospace;font-size:13.6px" fill="#f6f2d6">D0</text><text transform="translate(844.2,415.2) scale(1,1.3)" text-anchor="end" style="font-family:'Liberation Mono',monospace;font-size:13.6px" fill="#f6f2d6">C4</text><text transform="translate(775,435.2) scale(1,1.3)" style="font-family:'Liberation Mono',monospace;font-size:13.6px" fill="#f6f2d6">D1</text><text transform="translate(844.2,435.2) scale(1,1.3)" text-anchor="end" style="font-family:'Liberation Mono',monospace;font-size:13.6px" fill="#f6f2d6">C3</text><text transform="translate(775,455.2) scale(1,1.3)" style="font-family:'Liberation Mono',monospace;font-size:13.6px" fill="#f6f2d6">D2</text><text transform="translate(844.2,455.2) scale(1,1.3)" text-anchor="end" style="font-family:'Liberation Mono',monospace;font-size:13.6px" fill="#f6f2d6">C2</text><text transform="translate(775,475.2) scale(1,1.3)" style="font-family:'Liberation Mono',monospace;font-size:13.6px" fill="#f6f2d6">D3</text><text transform="translate(844.2,475.2) scale(1,1.3)" text-anchor="end" style="font-family:'Liberation Mono',monospace;font-size:13.6px" fill="#f6f2d6">C1</text><text transform="translate(775,495.2) scale(1,1.3)" style="font-family:'Liberation Mono',monospace;font-size:13.6px" fill="#f6f2d6">D4</text><text transform="translate(844.2,495.2) scale(1,1.3)" text-anchor="end" style="font-family:'Liberation Mono',monospace;font-size:13.6px" fill="#f6f2d6">C0</text><text transform="translate(775,515.2) scale(1,1.3)" style="font-family:'Liberation Mono',monospace;font-size:13.6px" fill="#f6f2d6">Vcc</text><text transform="translate(844.2,515.2) scale(1,1.3)" text-anchor="end" style="font-family:'Liberation Mono',monospace;font-size:13.6px" fill="#f6f2d6">Gnd</text><text transform="translate(775,535.2) scale(1,1.3)" style="font-family:'Liberation Mono',monospace;font-size:13.6px" fill="#f6f2d6">Gnd</text><text transform="translate(844.2,535.2) scale(1,1.3)" text-anchor="end" style="font-family:'Liberation Mono',monospace;font-size:13.6px" fill="#f6f2d6">Ar</text><text transform="translate(775,555.2) scale(1,1.3)" style="font-family:'Liberation Mono',monospace;font-size:13.6px" fill="#f6f2d6">B6</text><text transform="translate(844.2,555.2) scale(1,1.3)" text-anchor="end" style="font-family:'Liberation Mono',monospace;font-size:13.6px" fill="#f6f2d6">A+</text><text transform="translate(775,575.2) scale(1,1.3)" style="font-family:'Liberation Mono',monospace;font-size:13.6px" fill="#f6f2d6">B7</text><text transform="translate(844.2,575.2) scale(1,1.3)" text-anchor="end" style="font-family:'Liberation Mono',monospace;font-size:13.6px" fill="#f6f2d6">B5</text><text transform="translate(775,595.2) scale(1,1.3)" style="font-family:'Liberation Mono',monospace;font-size:13.6px" fill="#f6f2d6">D5</text><text transform="translate(844.2,595.2) scale(1,1.3)" text-anchor="end" style="font-family:'Liberation Mono',monospace;font-size:13.6px" fill="#f6f2d6">B4</text><text transform="translate(775,615.2) scale(1,1.3)" style="font-family:'Liberation Mono',monospace;font-size:13.6px" fill="#f6f2d6">D6</text><text transform="translate(844.2,615.2) scale(1,1.3)" text-anchor="end" style="font-family:'Liberation Mono',monospace;font-size:13.6px" fill="#f6f2d6">B3</text><text transform="translate(775,635.2) scale(1,1.3)" style="font-family:'Liberation Mono',monospace;font-size:13.6px" fill="#f6f2d6">D7</text><text transform="translate(844.2,635.2) scale(1,1.3)" text-anchor="end" style="font-family:'Liberation Mono',monospace;font-size:13.6px" fill="#f6f2d6">B2</text><text transform="translate(775,655.2) scale(1,1.3)" style="font-family:'Liberation Mono',monospace;font-size:13.6px" fill="#f6f2d6">B0</text><text transform="translate(844.2,655.2) scale(1,1.3)" text-anchor="end" style="font-family:'Liberation Mono',monospace;font-size:13.6px" fill="#f6f2d6">B1</text><text transform="translate(813.5,521) rotate(-90)" text-anchor="middle" style="font-family:'Liberation Mono',monospace;font-size:12px;font-weight:700" fill="#8c8a78">mega168</text><text x="725.4" y="352.4" style="font-family:'Liberation Sans',sans-serif;font-size:24.4px" fill="#0b0b8f" textLength="124.8" lengthAdjust="spacingAndGlyphs">atmega168</text><rect x="980.4" y="280" width="258.8" height="209.5" rx="4" fill="#34476a" stroke="#000" stroke-width="2.6"/><rect x="990" y="290" width="240" height="150" rx="19" fill="#c8dcb4" stroke="#000" stroke-width="2.2"/><rect x="1005.5" y="304.5" width="210" height="120" fill="#c9d6b2"/><path d="M1020.5 304.5h135.0v2.5h-135.0zM1170.5 304.5h45.0v2.5h-45.0zM1005.5 422.0h75.0v2.5h-75.0zM1095.5 422.0h120.0v2.5h-120.0zM1005.5 324.5h2.5v100.0h-2.5zM1213.0 304.5h2.5v60.0h-2.5zM1213.0 384.5h2.5v40.0h-2.5zM1038.0 324.5h2.5v2.5h-2.5zM1038.0 327.0h2.5v2.5h-2.5zM1038.0 329.5h2.5v2.5h-2.5zM1038.0 332.0h2.5v2.5h-2.5zM1038.0 334.5h2.5v2.5h-2.5zM1038.0 337.0h2.5v2.5h-2.5zM1038.0 339.5h2.5v2.5h-2.5zM1040.5 324.5h2.5v2.5h-2.5zM1040.5 339.5h2.5v2.5h-2.5zM1043.0 324.5h2.5v2.5h-2.5zM1043.0 339.5h2.5v2.5h-2.5zM1045.5 327.0h2.5v2.5h-2.5zM1045.5 337.0h2.5v2.5h-2.5zM1048.0 329.5h2.5v2.5h-2.5zM1048.0 332.0h2.5v2.5h-2.5zM1048.0 334.5h2.5v2.5h-2.5zM1055.5 329.5h2.5v2.5h-2.5zM1055.5 339.5h2.5v2.5h-2.5zM1058.0 324.5h2.5v2.5h-2.5zM1058.0 329.5h2.5v2.5h-2.5zM1058.0 332.0h2.5v2.5h-2.5zM1058.0 334.5h2.5v2.5h-2.5zM1058.0 337.0h2.5v2.5h-2.5zM1058.0 339.5h2.5v2.5h-2.5zM1060.5 339.5h2.5v2.5h-2.5zM1068.0 332.0h2.5v2.5h-2.5zM1068.0 339.5h2.5v2.5h-2.5zM1070.5 329.5h2.5v2.5h-2.5zM1070.5 334.5h2.5v2.5h-2.5zM1070.5 339.5h2.5v2.5h-2.5zM1073.0 329.5h2.5v2.5h-2.5zM1073.0 334.5h2.5v2.5h-2.5zM1073.0 339.5h2.5v2.5h-2.5zM1075.5 329.5h2.5v2.5h-2.5zM1075.5 334.5h2.5v2.5h-2.5zM1075.5 339.5h2.5v2.5h-2.5zM1078.0 337.0h2.5v2.5h-2.5zM1083.0 329.5h2.5v2.5h-2.5zM1083.0 332.0h2.5v2.5h-2.5zM1083.0 334.5h2.5v2.5h-2.5zM1083.0 337.0h2.5v2.5h-2.5zM1083.0 339.5h2.5v2.5h-2.5zM1085.5 329.5h2.5v2.5h-2.5zM1085.5 334.5h2.5v2.5h-2.5zM1088.0 329.5h2.5v2.5h-2.5zM1088.0 334.5h2.5v2.5h-2.5zM1090.5 329.5h2.5v2.5h-2.5zM1090.5 334.5h2.5v2.5h-2.5zM1093.0 332.0h2.5v2.5h-2.5zM1100.5 324.5h2.5v2.5h-2.5zM1100.5 339.5h2.5v2.5h-2.5zM1103.0 324.5h2.5v2.5h-2.5zM1103.0 327.0h2.5v2.5h-2.5zM1103.0 329.5h2.5v2.5h-2.5zM1103.0 332.0h2.5v2.5h-2.5zM1103.0 334.5h2.5v2.5h-2.5zM1103.0 337.0h2.5v2.5h-2.5zM1103.0 339.5h2.5v2.5h-2.5zM1105.5 339.5h2.5v2.5h-2.5zM1113.0 337.0h2.5v2.5h-2.5zM1115.5 329.5h2.5v2.5h-2.5zM1115.5 334.5h2.5v2.5h-2.5zM1115.5 339.5h2.5v2.5h-2.5zM1118.0 329.5h2.5v2.5h-2.5zM1118.0 334.5h2.5v2.5h-2.5zM1118.0 339.5h2.5v2.5h-2.5zM1120.5 329.5h2.5v2.5h-2.5zM1120.5 334.5h2.5v2.5h-2.5zM1120.5 339.5h2.5v2.5h-2.5zM1123.0 332.0h2.5v2.5h-2.5zM1123.0 334.5h2.5v2.5h-2.5zM1123.0 337.0h2.5v2.5h-2.5zM1123.0 339.5h2.5v2.5h-2.5zM1128.0 329.5h2.5v2.5h-2.5zM1128.0 332.0h2.5v2.5h-2.5zM1130.5 334.5h2.5v2.5h-2.5zM1130.5 339.5h2.5v2.5h-2.5zM1133.0 334.5h2.5v2.5h-2.5zM1133.0 339.5h2.5v2.5h-2.5zM1135.5 334.5h2.5v2.5h-2.5zM1135.5 339.5h2.5v2.5h-2.5zM1138.0 329.5h2.5v2.5h-2.5zM1138.0 332.0h2.5v2.5h-2.5zM1138.0 334.5h2.5v2.5h-2.5zM1138.0 337.0h2.5v2.5h-2.5zM1160.5 327.0h2.5v2.5h-2.5zM1160.5 339.5h2.5v2.5h-2.5zM1163.0 324.5h2.5v2.5h-2.5zM1163.0 327.0h2.5v2.5h-2.5zM1163.0 329.5h2.5v2.5h-2.5zM1163.0 332.0h2.5v2.5h-2.5zM1163.0 334.5h2.5v2.5h-2.5zM1163.0 337.0h2.5v2.5h-2.5zM1163.0 339.5h2.5v2.5h-2.5zM1165.5 339.5h2.5v2.5h-2.5z" fill="#111"/><path d="M1030 489 V509" stroke="#000" stroke-width="7" stroke-linecap="round"/><circle cx="1030" cy="510.5" r="2.4" fill="#2a2a48"/><text transform="translate(1035.5,484.5) rotate(-90) scale(1,1.3)" style="font-family:'Liberation Mono',monospace;font-size:13.6px" fill="#f6f2d6">RST</text><path d="M1070 489 V509" stroke="#000" stroke-width="7" stroke-linecap="round"/><circle cx="1070" cy="510.5" r="2.4" fill="#2a2a48"/><text transform="translate(1075.5,484.5) rotate(-90) scale(1,1.3)" style="font-family:'Liberation Mono',monospace;font-size:13.6px" fill="#f6f2d6">CS</text><path d="M1110 489 V509" stroke="#000" stroke-width="7" stroke-linecap="round"/><circle cx="1110" cy="510.5" r="2.4" fill="#2a2a48"/><text transform="translate(1115.5,484.5) rotate(-90) scale(1,1.3)" style="font-family:'Liberation Mono',monospace;font-size:13.6px" fill="#f6f2d6">D/C</text><path d="M1150 489 V509" stroke="#000" stroke-width="7" stroke-linecap="round"/><circle cx="1150" cy="510.5" r="2.4" fill="#2a2a48"/><text transform="translate(1155.5,484.5) rotate(-90) scale(1,1.3)" style="font-family:'Liberation Mono',monospace;font-size:13.6px" fill="#f6f2d6">DIN</text><path d="M1190 489 V509" stroke="#000" stroke-width="7" stroke-linecap="round"/><circle cx="1190" cy="510.5" r="2.4" fill="#2a2a48"/><text transform="translate(1195.5,484.5) rotate(-90) scale(1,1.3)" style="font-family:'Liberation Mono',monospace;font-size:13.6px" fill="#f6f2d6">CLK</text><text x="1043.5" y="268" style="font-family:'Liberation Sans',sans-serif;font-size:24.2px" fill="#0b0b8f" textLength="95.7" lengthAdjust="spacingAndGlyphs">Display-1</text><rect x="1240.4" y="280" width="258.8" height="209.5" rx="4" fill="#34476a" stroke="#000" stroke-width="2.6"/><rect x="1250" y="290" width="240" height="150" rx="19" fill="#c8dcb4" stroke="#000" stroke-width="2.2"/><rect x="1265.5" y="304.5" width="210" height="120" fill="#c9d6b2"/><path d="M1265.5 304.5h90.0v2.5h-90.0zM1370.5 304.5h105.0v2.5h-105.0zM1265.5 422.0h15.0v2.5h-15.0zM1295.5 422.0h135.0v2.5h-135.0zM1445.5 422.0h30.0v2.5h-30.0zM1265.5 304.5h2.5v80.0h-2.5zM1265.5 404.5h2.5v20.0h-2.5zM1473.0 304.5h2.5v60.0h-2.5zM1473.0 384.5h2.5v40.0h-2.5zM1298.0 324.5h2.5v2.5h-2.5zM1298.0 327.0h2.5v2.5h-2.5zM1298.0 329.5h2.5v2.5h-2.5zM1298.0 332.0h2.5v2.5h-2.5zM1298.0 334.5h2.5v2.5h-2.5zM1298.0 337.0h2.5v2.5h-2.5zM1298.0 339.5h2.5v2.5h-2.5zM1300.5 324.5h2.5v2.5h-2.5zM1300.5 339.5h2.5v2.5h-2.5zM1303.0 324.5h2.5v2.5h-2.5zM1303.0 339.5h2.5v2.5h-2.5zM1305.5 327.0h2.5v2.5h-2.5zM1305.5 337.0h2.5v2.5h-2.5zM1308.0 329.5h2.5v2.5h-2.5zM1308.0 332.0h2.5v2.5h-2.5zM1308.0 334.5h2.5v2.5h-2.5zM1315.5 329.5h2.5v2.5h-2.5zM1315.5 339.5h2.5v2.5h-2.5zM1318.0 324.5h2.5v2.5h-2.5zM1318.0 329.5h2.5v2.5h-2.5zM1318.0 332.0h2.5v2.5h-2.5zM1318.0 334.5h2.5v2.5h-2.5zM1318.0 337.0h2.5v2.5h-2.5zM1318.0 339.5h2.5v2.5h-2.5zM1320.5 339.5h2.5v2.5h-2.5zM1328.0 332.0h2.5v2.5h-2.5zM1328.0 339.5h2.5v2.5h-2.5zM1330.5 329.5h2.5v2.5h-2.5zM1330.5 334.5h2.5v2.5h-2.5zM1330.5 339.5h2.5v2.5h-2.5zM1333.0 329.5h2.5v2.5h-2.5zM1333.0 334.5h2.5v2.5h-2.5zM1333.0 339.5h2.5v2.5h-2.5zM1335.5 329.5h2.5v2.5h-2.5zM1335.5 334.5h2.5v2.5h-2.5zM1335.5 339.5h2.5v2.5h-2.5zM1338.0 337.0h2.5v2.5h-2.5zM1360.5 324.5h2.5v2.5h-2.5zM1360.5 339.5h2.5v2.5h-2.5zM1363.0 324.5h2.5v2.5h-2.5zM1363.0 327.0h2.5v2.5h-2.5zM1363.0 329.5h2.5v2.5h-2.5zM1363.0 332.0h2.5v2.5h-2.5zM1363.0 334.5h2.5v2.5h-2.5zM1363.0 337.0h2.5v2.5h-2.5zM1363.0 339.5h2.5v2.5h-2.5zM1365.5 339.5h2.5v2.5h-2.5zM1388.0 329.5h2.5v2.5h-2.5zM1388.0 332.0h2.5v2.5h-2.5zM1390.5 334.5h2.5v2.5h-2.5zM1390.5 339.5h2.5v2.5h-2.5zM1393.0 334.5h2.5v2.5h-2.5zM1393.0 339.5h2.5v2.5h-2.5zM1395.5 334.5h2.5v2.5h-2.5zM1395.5 339.5h2.5v2.5h-2.5zM1398.0 329.5h2.5v2.5h-2.5zM1398.0 332.0h2.5v2.5h-2.5zM1398.0 334.5h2.5v2.5h-2.5zM1398.0 337.0h2.5v2.5h-2.5zM1418.0 327.0h2.5v2.5h-2.5zM1418.0 339.5h2.5v2.5h-2.5zM1420.5 324.5h2.5v2.5h-2.5zM1420.5 337.0h2.5v2.5h-2.5zM1420.5 339.5h2.5v2.5h-2.5zM1423.0 324.5h2.5v2.5h-2.5zM1423.0 334.5h2.5v2.5h-2.5zM1423.0 339.5h2.5v2.5h-2.5zM1425.5 324.5h2.5v2.5h-2.5zM1425.5 332.0h2.5v2.5h-2.5zM1425.5 339.5h2.5v2.5h-2.5zM1428.0 327.0h2.5v2.5h-2.5zM1428.0 329.5h2.5v2.5h-2.5zM1428.0 339.5h2.5v2.5h-2.5zM1460.5 372.0h2.5v2.5h-2.5zM1463.0 367.0h2.5v2.5h-2.5zM1463.0 372.0h2.5v2.5h-2.5zM1463.0 377.0h2.5v2.5h-2.5zM1465.5 369.5h2.5v2.5h-2.5zM1465.5 372.0h2.5v2.5h-2.5zM1465.5 374.5h2.5v2.5h-2.5zM1468.0 367.0h2.5v2.5h-2.5zM1468.0 372.0h2.5v2.5h-2.5zM1468.0 377.0h2.5v2.5h-2.5zM1470.5 372.0h2.5v2.5h-2.5z" fill="#111"/><path d="M1290 489 V509" stroke="#000" stroke-width="7" stroke-linecap="round"/><circle cx="1290" cy="510.5" r="2.4" fill="#2a2a48"/><text transform="translate(1295.5,484.5) rotate(-90) scale(1,1.3)" style="font-family:'Liberation Mono',monospace;font-size:13.6px" fill="#f6f2d6">RST</text><path d="M1330 489 V509" stroke="#000" stroke-width="7" stroke-linecap="round"/><circle cx="1330" cy="510.5" r="2.4" fill="#2a2a48"/><text transform="translate(1335.5,484.5) rotate(-90) scale(1,1.3)" style="font-family:'Liberation Mono',monospace;font-size:13.6px" fill="#f6f2d6">CS</text><path d="M1370 489 V509" stroke="#000" stroke-width="7" stroke-linecap="round"/><circle cx="1370" cy="510.5" r="2.4" fill="#2a2a48"/><text transform="translate(1375.5,484.5) rotate(-90) scale(1,1.3)" style="font-family:'Liberation Mono',monospace;font-size:13.6px" fill="#f6f2d6">D/C</text><path d="M1410 489 V509" stroke="#000" stroke-width="7" stroke-linecap="round"/><circle cx="1410" cy="510.5" r="2.4" fill="#2a2a48"/><text transform="translate(1415.5,484.5) rotate(-90) scale(1,1.3)" style="font-family:'Liberation Mono',monospace;font-size:13.6px" fill="#f6f2d6">DIN</text><path d="M1450 489 V509" stroke="#000" stroke-width="7" stroke-linecap="round"/><circle cx="1450" cy="510.5" r="2.4" fill="#2a2a48"/><text transform="translate(1455.5,484.5) rotate(-90) scale(1,1.3)" style="font-family:'Liberation Mono',monospace;font-size:13.6px" fill="#f6f2d6">CLK</text><text x="1300.7" y="270.6" style="font-family:'Liberation Sans',sans-serif;font-size:24.2px" fill="#0b0b8f" textLength="98.3" lengthAdjust="spacingAndGlyphs">Display-2</text></g></svg>
<div style="position:absolute;left:397px;top:874.00px;height:15px;line-height:15px;font-family:'Liberation Sans', sans-serif;font-size:11.8px;font-weight:700;color:#000;white-space:pre;">Время симуляции:</div>
<div style="position:absolute;left:397px;top:891.50px;height:15px;line-height:15px;font-family:'Liberation Sans', sans-serif;font-size:11.8px;font-weight:700;color:#a80000;white-space:pre;">00:00:12 s  500 ms  000 µs  000 ns  001 ps</div>
<div style="position:absolute;left:397px;top:918.80px;height:15px;line-height:15px;font-family:'Liberation Sans', sans-serif;font-size:11.8px;font-weight:700;color:#000;white-space:pre;">Целевая скорость:</div>
<div style="position:absolute;left:541.5px;top:918.80px;height:15px;line-height:15px;font-family:'Liberation Sans', sans-serif;font-size:11.8px;font-weight:700;color:#000096;white-space:pre;">100.00 %</div>
<div style="position:absolute;left:397px;top:937.00px;height:15px;line-height:15px;font-family:'Liberation Sans', sans-serif;font-size:11.8px;font-weight:700;color:#000;white-space:pre;">Реальная скорость:</div>
<div style="position:absolute;left:541.5px;top:937.00px;height:15px;line-height:15px;font-family:'Liberation Sans', sans-serif;font-size:11.8px;font-weight:700;color:#000096;white-space:pre;">095.46 %</div>
<div style="position:absolute;left:397px;top:963.90px;height:15px;line-height:15px;font-family:'Liberation Sans', sans-serif;font-size:11.8px;font-weight:700;color:#000;white-space:pre;">Загрузка движка:</div>
<div style="position:absolute;left:541.5px;top:963.90px;height:15px;line-height:15px;font-family:'Liberation Sans', sans-serif;font-size:11.8px;font-weight:700;color:#000096;white-space:pre;">021.68 %</div>
<div style="position:absolute;left:397px;top:982.00px;height:15px;line-height:15px;font-family:'Liberation Sans', sans-serif;font-size:11.8px;font-weight:700;color:#000;white-space:pre;">Загрузка обновления:</div>
<div style="position:absolute;left:541.5px;top:982.00px;height:15px;line-height:15px;font-family:'Liberation Sans', sans-serif;font-size:11.8px;font-weight:700;color:#000096;white-space:pre;">000.21 %</div>
<div style="position:absolute;left:397px;top:1008.70px;height:15px;line-height:15px;font-family:'Liberation Sans', sans-serif;font-size:11.8px;font-weight:700;color:#000;white-space:pre;">Основной CPU</div>
<div style="position:absolute;left:541.5px;top:1008.70px;height:15px;line-height:15px;font-family:'Liberation Sans', sans-serif;font-size:11.8px;font-weight:700;color:#000096;white-space:pre;">atmega168</div>
<div style="position:absolute;left:541.5px;top:1027.50px;height:15px;line-height:15px;font-family:'Liberation Sans', sans-serif;font-size:11.8px;font-weight:700;color:#000096;white-space:pre;">mega168 at 16 MHz</div>
<div style="position:absolute;left:1198px;top:869px;width:1px;height:1px;background:#a8a8a8"></div>
<div style="position:absolute;left:1200px;top:869px;width:1px;height:1px;background:#a8a8a8"></div>
<div style="position:absolute;left:1202px;top:869px;width:1px;height:1px;background:#a8a8a8"></div>
<div style="position:absolute;left:1204px;top:869px;width:1px;height:1px;background:#a8a8a8"></div>
<div style="position:absolute;left:1206px;top:869px;width:1px;height:1px;background:#a8a8a8"></div>
<div style="position:absolute;left:1208px;top:869px;width:1px;height:1px;background:#a8a8a8"></div>
<div style="position:absolute;left:804px;top:872px;width:1211px;height:171px;background:#221d3c;border-top:1px solid #c8c8c8;border-left:1px solid #c8c8c8;box-sizing:border-box"></div>
<div style="position:absolute;left:814.3px;top:874.83px;height:15px;line-height:15px;font-family:'Liberation Mono', monospace;font-size:11.58px;font-weight:400;color:#e2dcc0;white-space:pre;transform:scaleY(1.14);transform-origin:0 6.77px;"><span style="color:#e2dcc0">Speed: </span><span style="color:#8c8cff">100</span><span style="color:#e2dcc0"> %</span></div>
<div style="position:absolute;left:814.3px;top:890.83px;height:15px;line-height:15px;font-family:'Liberation Mono', monospace;font-size:11.58px;font-weight:400;color:#e2dcc0;white-space:pre;transform:scaleY(1.14);transform-origin:0 6.77px;"><span style="color:#e2dcc0">Speed: 1e+</span><span style="color:#8c8cff">12</span></div>
<div style="position:absolute;left:974.15px;top:890.83px;height:15px;line-height:15px;font-family:'Liberation Mono', monospace;font-size:11.58px;font-weight:400;color:#e2dcc0;white-space:pre;transform:scaleY(1.14);transform-origin:0 6.77px;"><span style="color:#e2dcc0">ps per Sec</span></div>
<div style="position:absolute;left:814.3px;top:906.83px;height:15px;line-height:15px;font-family:'Liberation Mono', monospace;font-size:11.58px;font-weight:400;color:#e2dcc0;white-space:pre;transform:scaleY(1.14);transform-origin:0 6.77px;"><span style="color:#e2dcc0">FPS:   </span><span style="color:#8c8cff">20</span></div>
<div style="position:absolute;left:894.3px;top:906.83px;height:15px;line-height:15px;font-family:'Liberation Mono', monospace;font-size:11.58px;font-weight:400;color:#e2dcc0;white-space:pre;transform:scaleY(1.14);transform-origin:0 6.77px;"><span style="color:#e2dcc0">Frames per Sec</span></div>
<div style="position:absolute;left:814.3px;top:922.83px;height:15px;line-height:15px;font-family:'Liberation Mono', monospace;font-size:11.58px;font-weight:400;color:#e2dcc0;white-space:pre;transform:scaleY(1.14);transform-origin:0 6.77px;"><span style="color:#e2dcc0">Frame: 5e+</span><span style="color:#8c8cff">10</span></div>
<div style="position:absolute;left:974.15px;top:922.83px;height:15px;line-height:15px;font-family:'Liberation Mono', monospace;font-size:11.58px;font-weight:400;color:#e2dcc0;white-space:pre;transform:scaleY(1.14);transform-origin:0 6.77px;"><span style="color:#e2dcc0">ps per Frame</span></div>
<div style="position:absolute;left:814.3px;top:938.83px;height:15px;line-height:15px;font-family:'Liberation Mono', monospace;font-size:11.58px;font-weight:400;color:#e2dcc0;white-space:pre;transform:scaleY(1.14);transform-origin:0 6.77px;"><span style="color:#e2dcc0">NonLi: </span><span style="color:#8c8cff">100000</span></div>
<div style="position:absolute;left:974.15px;top:938.83px;height:15px;line-height:15px;font-family:'Liberation Mono', monospace;font-size:11.58px;font-weight:400;color:#e2dcc0;white-space:pre;transform:scaleY(1.14);transform-origin:0 6.77px;"><span style="color:#e2dcc0">Max Iterations</span></div>
<div style="position:absolute;left:814.3px;top:954.83px;height:15px;line-height:15px;font-family:'Liberation Mono', monospace;font-size:11.58px;font-weight:400;color:#e2dcc0;white-space:pre;transform:scaleY(1.14);transform-origin:0 6.77px;"><span style="color:#e2dcc0">React: 1e+</span><span style="color:#8c8cff">06</span></div>
<div style="position:absolute;left:974.15px;top:954.83px;height:15px;line-height:15px;font-family:'Liberation Mono', monospace;font-size:11.58px;font-weight:400;color:#e2dcc0;white-space:pre;transform:scaleY(1.14);transform-origin:0 6.77px;"><span style="color:#e2dcc0">ps Reactive step</span></div>
<div style="position:absolute;left:814.3px;top:986.83px;height:15px;line-height:15px;font-family:'Liberation Mono', monospace;font-size:11.58px;font-weight:400;color:#e2dcc0;white-space:pre;transform:scaleY(1.14);transform-origin:0 6.77px;"><span style="color:#e2dcc0">    Simulation Running...</span></div>
<div style="position:absolute;left:2000px;top:872px;width:15px;height:171px;background:#e2e2e2;border-left:1px solid #d0d0d0;box-sizing:border-box"></div>
<div style="position:absolute;left:2000px;top:872px;width:15px;height:14px;background:linear-gradient(#fff,#ececec);border:1px solid #cfcfcf;box-sizing:border-box"></div>
<svg style="position:absolute;left:2003px;top:876px" width="9" height="6"><path d="M0.5 5L4.5 0.5L8.5 5Z" fill="#555"/></svg>
<div style="position:absolute;left:2000px;top:1001px;width:15px;height:28px;background:linear-gradient(to right,#fff,#f0f0f0);border:1px solid #d4d4d4;box-sizing:border-box"></div>
<div style="position:absolute;left:2000px;top:1029px;width:15px;height:14px;background:linear-gradient(#fff,#ececec);border:1px solid #cfcfcf;box-sizing:border-box"></div>
<svg style="position:absolute;left:2003px;top:1033px" width="9" height="6"><path d="M0.5 0.5L4.5 5L8.5 0.5Z" fill="#555"/></svg>
<svg style="position:absolute;left:1981px;top:34px" width="21" height="20" viewBox="0 0 21 20"><path d="M9 1 L17 9 L9 17 L1 9Z" fill="#454545" stroke="#454545" stroke-width="1.5" stroke-linejoin="round"/><circle cx="9" cy="5.3" r="1.2" fill="#f0f0f0"/><rect x="8" y="7.3" width="2" height="6.5" rx="1" fill="#f0f0f0"/><path d="M16 17h4l-2 2z" fill="#454545"/></svg>
<div style="position:absolute;left:2009px;top:36px;width:1px;height:15px;background:#d4d4d4"></div>
<svg style="position:absolute;left:2027.4px;top:33.2px" width="21" height="21" viewBox="0 0 21 21"><g transform="translate(10,10)"><rect x="-1.3" y="-8.5" width="2.6" height="4.2" rx="1.1" fill="#454545" transform="rotate(0)"/><rect x="-1.3" y="-8.5" width="2.6" height="4.2" rx="1.1" fill="#454545" transform="rotate(45)"/><rect x="-1.3" y="-8.5" width="2.6" height="4.2" rx="1.1" fill="#454545" transform="rotate(90)"/><rect x="-1.3" y="-8.5" width="2.6" height="4.2" rx="1.1" fill="#454545" transform="rotate(135)"/><rect x="-1.3" y="-8.5" width="2.6" height="4.2" rx="1.1" fill="#454545" transform="rotate(180)"/><rect x="-1.3" y="-8.5" width="2.6" height="4.2" rx="1.1" fill="#454545" transform="rotate(225)"/><rect x="-1.3" y="-8.5" width="2.6" height="4.2" rx="1.1" fill="#454545" transform="rotate(270)"/><rect x="-1.3" y="-8.5" width="2.6" height="4.2" rx="1.1" fill="#454545" transform="rotate(315)"/><circle r="4.6" fill="none" stroke="#454545" stroke-width="2.3"/></g><path d="M15 17h4.5l-2.25 2.2z" fill="#454545"/></svg>
<div style="position:absolute;left:2072px;top:36px;width:1px;height:15px;background:#d4d4d4"></div>
<svg style="position:absolute;left:2080px;top:34px" width="21" height="21" viewBox="0 0 21 21"><path d="M16 4.2 A3.4 3.4 0 0 0 12.6 1.1 H4.5 A3.4 3.4 0 0 0 1.1 4.5 V12.3 A3.4 3.4 0 0 0 4.5 15.7 H12.6 A3.4 3.4 0 0 0 16 12.6" fill="none" stroke="#454545" stroke-width="2.2"/><path d="M5 4.2h5M5 8.5h4M5 12.7h5" stroke="#454545" stroke-width="2.2" stroke-linecap="round"/><path d="M14.1 12.5V6.5" stroke="#454545" stroke-width="2.2"/><path d="M10.8 7.6L14.1 3.6L17.4 7.6Z" fill="#454545" stroke="#454545" stroke-width="1" stroke-linejoin="round"/><path d="M16.3 16.6h4.4l-2.2 2.4z" fill="#454545"/></svg>
<svg style="position:absolute;left:2109.5px;top:33px" width="20" height="20" viewBox="0 0 20 20"><path d="M12 9.2 H10.8 L8 6.3 H3.6 a2.1 2.1 0 0 0 -2.1 2.1 V15.6 a2.1 2.1 0 0 0 2.1 2.1 H13.4 a2.1 2.1 0 0 0 2.1-2.1 V10.6" fill="none" stroke="#454545" stroke-width="2.1" stroke-linejoin="round"/><path d="M14.9 1.8V8.6M11.5 5.3h7" stroke="#454545" stroke-width="1.9"/></svg>
<svg style="position:absolute;left:2138.5px;top:33px" width="18" height="20" viewBox="0 0 18 20"><path d="M1.5 8.7 a2.1 2.1 0 0 1 2.1-2.1 H6.4 L8.6 9.1 H13.1 a2.1 2.1 0 0 1 2.1 2.1 V15.6 a2.1 2.1 0 0 1 -2.1 2.1 H3.6 a2.1 2.1 0 0 1 -2.1-2.1Z" fill="none" stroke="#454545" stroke-width="2.1" stroke-linejoin="round"/><path d="M5 5L8.5 1L12 5Z" fill="#454545"/></svg>
<svg style="position:absolute;left:2167.5px;top:33px" width="18" height="20" viewBox="0 0 18 20"><path d="M1.5 8.7 a2.1 2.1 0 0 1 2.1-2.1 H6.4 L8.6 9.1 H13.1 a2.1 2.1 0 0 1 2.1 2.1 V15.6 a2.1 2.1 0 0 1 -2.1 2.1 H3.6 a2.1 2.1 0 0 1 -2.1-2.1Z" fill="none" stroke="#454545" stroke-width="2.1" stroke-linejoin="round"/><path d="M5 1h7L8.5 4.5Z" fill="#454545"/></svg>
<svg style="position:absolute;left:2196.5px;top:33px" width="18" height="20" viewBox="0 0 18 20"><path d="M1.5 8.7 a2.1 2.1 0 0 1 2.1-2.1 H6.4 L8.6 9.1 H13.1 a2.1 2.1 0 0 1 2.1 2.1 V15.6 a2.1 2.1 0 0 1 -2.1 2.1 H3.6 a2.1 2.1 0 0 1 -2.1-2.1Z" fill="none" stroke="#454545" stroke-width="2.1" stroke-linejoin="round"/><path d="M5 1h7L8.5 4.5Z" fill="#454545"/><circle cx="5" cy="13.5" r="1.25" fill="#454545"/><circle cx="8.6" cy="13.5" r="1.25" fill="#454545"/><circle cx="12.2" cy="13.5" r="1.25" fill="#454545"/></svg>
<div style="position:absolute;left:2224px;top:36px;width:1px;height:15px;background:#d4d4d4"></div>
<svg style="position:absolute;left:2239px;top:33px" width="20" height="21" viewBox="0 0 20 21"><rect x="1.5" y="1.5" width="12" height="12" rx="2.5" fill="none" stroke="#454545" stroke-width="2"/><path d="M13 13L17.5 17.5" stroke="#454545" stroke-width="2.5"/><circle cx="2.8" cy="17.5" r="1.1" fill="#454545"/><circle cx="6.5" cy="17.5" r="1.1" fill="#454545"/><circle cx="10.2" cy="17.5" r="1.1" fill="#454545"/></svg>
<div style="position:absolute;left:2267px;top:36px;width:1px;height:15px;background:#d4d4d4"></div>
<svg style="position:absolute;left:2287px;top:33px" width="19" height="19" viewBox="0 0 19 19"><path d="M15.5 3.5 A3 3 0 0 0 13 1.5 H4.5 A3 3 0 0 0 1.5 4.5 V13.5 A3 3 0 0 0 4.5 16.5 H13 A3 3 0 0 0 16 13.5 V9" fill="none" stroke="#454545" stroke-width="2"/><path d="M5 8.5L8.5 12L16.5 4" fill="none" stroke="#454545" stroke-width="2"/></svg>
<svg style="position:absolute;left:2316px;top:33px" width="19" height="22" viewBox="0 0 19 22"><rect x="2" y="4.5" width="13" height="7" fill="none" stroke="#454545" stroke-width="2"/><path d="M5 1.5v3M8.5 1.5v3M12 1.5v3M5 11.5v3M8.5 11.5v3" stroke="#454545" stroke-width="1.8" stroke-linecap="round"/><path d="M13.5 20.5V14" stroke="#454545" stroke-width="2" stroke-linecap="round"/><path d="M10 15.5L13.5 11.5L17 15.5Z" fill="#454545" stroke="#454545" stroke-width="1.2" stroke-linejoin="round"/></svg>
<div style="position:absolute;left:2344px;top:36px;width:1px;height:15px;background:#d4d4d4"></div>
<svg style="position:absolute;left:2352px;top:33px" width="20" height="20" viewBox="0 0 20 20"><path d="M1 1H9.5L17.5 9L9.5 17H1Z" fill="#454545"/><circle cx="6.5" cy="4" r="1" fill="#f0f0f0"/><path d="M6.5 6v7M3 7.5l2 1.5M10 7.5l-2 1.5M2.5 10h2.5M8 10h2.5M3 13l2-1.5M10 13l-2-1.5" stroke="#f0f0f0" stroke-width="1.3"/><ellipse cx="6.5" cy="9.5" rx="2.2" ry="3.5" fill="none" stroke="#f0f0f0" stroke-width="1"/></svg>
<div style="position:absolute;left:2019px;top:63px;width:145px;height:28px;background:#e9e9e9;border:1px solid #c2c2c2;border-bottom:none;border-radius:3px 3px 0 0;box-sizing:border-box"></div>
<div style="position:absolute;left:2031px;top:71.50px;height:14px;line-height:14px;font-family:'Liberation Sans', sans-serif;font-size:10.6px;font-weight:400;color:#000;white-space:pre;">m168_glcd8544.asm</div>
<svg style="position:absolute;left:2134.5px;top:72px" width="13" height="13" viewBox="0 0 13 13"><path d="M2.5 2.5L10.5 10.5" stroke="#111" stroke-width="1.8" stroke-linecap="round"/><path d="M10.8 2L2.2 11" stroke="#111" stroke-width="2.6" stroke-linecap="round"/></svg>
<div style="position:absolute;left:2164px;top:63px;width:143px;height:28px;background:#e9e9e9;border:1px solid #c2c2c2;border-bottom:none;border-radius:3px 3px 0 0;box-sizing:border-box"></div>
<div style="position:absolute;left:2175.5px;top:71.50px;height:14px;line-height:14px;font-family:'Liberation Sans', sans-serif;font-size:10.6px;font-weight:400;color:#000;white-space:pre;">m168_glcd8544.gcb</div>
<svg style="position:absolute;left:2277.5px;top:72px" width="13" height="13" viewBox="0 0 13 13"><path d="M2.5 2.5L10.5 10.5" stroke="#111" stroke-width="1.8" stroke-linecap="round"/><path d="M10.8 2L2.2 11" stroke="#111" stroke-width="2.6" stroke-linecap="round"/></svg>
<div style="position:absolute;left:2308px;top:61px;width:109px;height:31px;background:#ffffff;border:1px solid #c2c2c2;border-bottom:none;border-radius:3px 3px 0 0;box-sizing:border-box"></div>
<div style="position:absolute;left:2319px;top:71.00px;height:14px;line-height:14px;font-family:'Liberation Sans', sans-serif;font-size:10.6px;font-weight:400;color:#000;white-space:pre;">glcd8544.gcb</div>
<svg style="position:absolute;left:2388.5px;top:72px" width="13" height="13" viewBox="0 0 13 13"><path d="M2.5 2.5L10.5 10.5" stroke="#111" stroke-width="1.8" stroke-linecap="round"/><path d="M10.8 2L2.2 11" stroke="#111" stroke-width="2.6" stroke-linecap="round"/></svg>
<div style="position:absolute;left:2019px;top:91px;width:541px;height:703px;background:#fff;border:1px solid #adadad;box-sizing:border-box"></div>
<div style="position:absolute;left:2021px;top:93px;width:538px;height:700px;border:1px solid #b4b4b4;border-right:none;border-bottom:none;box-sizing:border-box"></div>
<div style="position:absolute;left:2022px;top:94px;width:38px;height:684px;background:#c0c0c0"></div>
<div style="position:absolute;left:2060px;top:94px;width:483px;height:684px;background:#fffff8"></div>
<div style="position:absolute;left:2064px;top:98px;width:479px;height:16px;background:#fbeedd"></div>
<div style="position:absolute;left:2060px;top:94px;width:483px;height:684px;overflow:hidden">
<div style="position:absolute;left:4.5px;top:7.23px;height:16px;line-height:16px;font-family:'Liberation Mono', monospace;font-size:11.6px;white-space:pre;transform:scaleY(1.26);transform-origin:0 7.27px"><span style="color:#00a050;font-style:italic">&#x27;USART settings</span></div>
<div style="position:absolute;left:4.5px;top:23.37px;height:16px;line-height:16px;font-family:'Liberation Mono', monospace;font-size:11.6px;white-space:pre;transform:scaleY(1.26);transform-origin:0 7.27px"><span style="color:#00a050;font-style:italic">&#x27;#define USART_BAUD_RATE 9600</span></div>
<div style="position:absolute;left:4.5px;top:39.51px;height:16px;line-height:16px;font-family:'Liberation Mono', monospace;font-size:11.6px;white-space:pre;transform:scaleY(1.26);transform-origin:0 7.27px"><span style="color:#00a050;font-style:italic">&#x27;#define USART_BLOCKING</span></div>
<div style="position:absolute;left:4.5px;top:55.65px;height:16px;line-height:16px;font-family:'Liberation Mono', monospace;font-size:11.6px;white-space:pre;transform:scaleY(1.26);transform-origin:0 7.27px"><span style="color:#00a050;font-style:italic">&#x27;#define USART_TX_BLOCKING</span></div>
<div style="position:absolute;left:4.5px;top:87.93px;height:16px;line-height:16px;font-family:'Liberation Mono', monospace;font-size:11.6px;white-space:pre;transform:scaleY(1.26);transform-origin:0 7.27px"><span style="color:#00a050;font-style:italic">&#x27;#define GLCD_RESET 8   &#x27; LCD RST .... Pin 1</span></div>
<div style="position:absolute;left:4.5px;top:104.07px;height:16px;line-height:16px;font-family:'Liberation Mono', monospace;font-size:11.6px;white-space:pre;transform:scaleY(1.26);transform-origin:0 7.27px"><span style="color:#00a050;font-style:italic">&#x27;#define GLCD_DC    0   &#x27; LCD Dat/Com. Pin 5</span></div>
<div style="position:absolute;left:4.5px;top:120.21px;height:16px;line-height:16px;font-family:'Liberation Mono', monospace;font-size:11.6px;white-space:pre;transform:scaleY(1.26);transform-origin:0 7.27px"><span style="color:#00a050;font-style:italic">&#x27;#define GLCD_SDIN  1   &#x27; LCD SPIDat . Pin 6</span></div>
<div style="position:absolute;left:4.5px;top:136.35px;height:16px;line-height:16px;font-family:'Liberation Mono', monospace;font-size:11.6px;white-space:pre;transform:scaleY(1.26);transform-origin:0 7.27px"><span style="color:#00a050;font-style:italic">&#x27;#define GLCD_SCLK  3   &#x27; LCD SPIClk . Pin 4</span></div>
<div style="position:absolute;left:4.5px;top:169.23px;height:16px;line-height:16px;font-family:'Liberation Mono', monospace;font-size:11.6px;white-space:pre;transform:scaleY(1.26);transform-origin:0 7.27px"><span style="color:#000080;font-weight:700">#define</span><span style="color:#000000"> LCD_X     </span><span style="color:#ff0000">84</span></div>
<div style="position:absolute;left:4.5px;top:186.13px;height:16px;line-height:16px;font-family:'Liberation Mono', monospace;font-size:11.6px;white-space:pre;transform:scaleY(1.26);transform-origin:0 7.27px"><span style="color:#000080;font-weight:700">#define</span><span style="color:#000000"> LCD_Y     </span><span style="color:#ff0000">48</span></div>
<div style="position:absolute;left:4.5px;top:219.93px;height:16px;line-height:16px;font-family:'Liberation Mono', monospace;font-size:11.6px;white-space:pre;transform:scaleY(1.26);transform-origin:0 7.27px"><span style="color:#000080;font-weight:700">#define</span><span style="color:#000000"> LCD_COM   </span><span style="color:#ff0000">0</span></div>
<div style="position:absolute;left:4.5px;top:236.83px;height:16px;line-height:16px;font-family:'Liberation Mono', monospace;font-size:11.6px;white-space:pre;transform:scaleY(1.26);transform-origin:0 7.27px"><span style="color:#000080;font-weight:700">#define</span><span style="color:#000000"> LCD_DAT   </span><span style="color:#ff0000">1</span></div>
<div style="position:absolute;left:4.5px;top:287.53px;height:16px;line-height:16px;font-family:'Liberation Mono', monospace;font-size:11.6px;white-space:pre;transform:scaleY(1.26);transform-origin:0 7.27px"><span style="color:#000080;font-weight:700">Sub</span><span style="color:#000000"> InitGlcd</span></div>
<div style="position:absolute;left:4.5px;top:321.33px;height:16px;line-height:16px;font-family:'Liberation Mono', monospace;font-size:11.6px;white-space:pre;transform:scaleY(1.26);transform-origin:0 7.27px"><span style="color:#000000">    </span><span style="color:#000080;font-weight:700">Set</span><span style="color:#000000"> GLCD_RESET </span><span style="color:#0000c8;font-weight:700">Off</span></div>
<div style="position:absolute;left:4.5px;top:338.23px;height:16px;line-height:16px;font-family:'Liberation Mono', monospace;font-size:11.6px;white-space:pre;transform:scaleY(1.26);transform-origin:0 7.27px"><span style="color:#000000">    </span><span style="color:#000080;font-weight:700">wait</span><span style="color:#000000"> </span><span style="color:#ff0000">100</span><span style="color:#000000"> </span><span style="color:#0000c8;font-weight:700">ms</span></div>
<div style="position:absolute;left:4.5px;top:355.13px;height:16px;line-height:16px;font-family:'Liberation Mono', monospace;font-size:11.6px;white-space:pre;transform:scaleY(1.26);transform-origin:0 7.27px"><span style="color:#000000">    </span><span style="color:#000080;font-weight:700">Set</span><span style="color:#000000"> GLCD_RESET </span><span style="color:#0000c8;font-weight:700">On</span></div>
<div style="position:absolute;left:4.5px;top:388.93px;height:16px;line-height:16px;font-family:'Liberation Mono', monospace;font-size:11.6px;white-space:pre;transform:scaleY(1.26);transform-origin:0 7.27px"><span style="color:#000000">    GlcdWrite</span><span style="color:#900000">(</span><span style="color:#000000"> LCD_COM, </span><span style="color:#ff0000">0x21</span><span style="color:#000000"> </span><span style="color:#900000">)</span><span style="color:#000000">                   </span><span style="color:#00a050;font-style:italic">&#x27; LCD Extended Commands</span></div>
<div style="position:absolute;left:4.5px;top:405.83px;height:16px;line-height:16px;font-family:'Liberation Mono', monospace;font-size:11.6px;white-space:pre;transform:scaleY(1.26);transform-origin:0 7.27px"><span style="color:#000000">    GlcdWrite</span><span style="color:#900000">(</span><span style="color:#000000"> LCD_COM, </span><span style="color:#ff0000">0xBf</span><span style="color:#000000"> </span><span style="color:#900000">)</span><span style="color:#000000">               </span><span style="color:#00a050;font-style:italic">&#x27; Set LCD Vop Contrast. &#x27;Contrast</span></div>
<div style="position:absolute;left:4.5px;top:422.73px;height:16px;line-height:16px;font-family:'Liberation Mono', monospace;font-size:11.6px;white-space:pre;transform:scaleY(1.26);transform-origin:0 7.27px"><span style="color:#000000">    GlcdWrite</span><span style="color:#900000">(</span><span style="color:#000000"> LCD_COM, </span><span style="color:#ff0000">0x04</span><span style="color:#000000"> </span><span style="color:#900000">)</span><span style="color:#000000">              </span><span style="color:#00a050;font-style:italic">&#x27; Set Temp coefficent. &#x27;coefficent</span></div>
<div style="position:absolute;left:4.5px;top:439.63px;height:16px;line-height:16px;font-family:'Liberation Mono', monospace;font-size:11.6px;white-space:pre;transform:scaleY(1.26);transform-origin:0 7.27px"><span style="color:#000000">    GlcdWrite</span><span style="color:#900000">(</span><span style="color:#000000"> LCD_COM, </span><span style="color:#ff0000">0x14</span><span style="color:#000000"> </span><span style="color:#900000">)</span><span style="color:#000000">               </span><span style="color:#00a050;font-style:italic">&#x27; LCD bias mode 1:48. &#x27;bias</span></div>
<div style="position:absolute;left:4.5px;top:456.53px;height:16px;line-height:16px;font-family:'Liberation Mono', monospace;font-size:11.6px;white-space:pre;transform:scaleY(1.26);transform-origin:0 7.27px"><span style="color:#000000">    GlcdWrite</span><span style="color:#900000">(</span><span style="color:#000000"> LCD_COM, </span><span style="color:#ff0000">0x0C</span><span style="color:#000000"> </span><span style="color:#900000">)</span><span style="color:#000000">    </span><span style="color:#00a050;font-style:italic">&#x27; LCD in normal mode. 0x0d for inverse</span></div>
<div style="position:absolute;left:4.5px;top:473.43px;height:16px;line-height:16px;font-family:'Liberation Mono', monospace;font-size:11.6px;white-space:pre;transform:scaleY(1.26);transform-origin:0 7.27px"><span style="color:#000000">    GlcdWrite</span><span style="color:#900000">(</span><span style="color:#000000"> LCD_COM, </span><span style="color:#ff0000">0x20</span><span style="color:#000000"> </span><span style="color:#900000">)</span></div>
<div style="position:absolute;left:4.5px;top:490.33px;height:16px;line-height:16px;font-family:'Liberation Mono', monospace;font-size:11.6px;white-space:pre;transform:scaleY(1.26);transform-origin:0 7.27px"><span style="color:#000000">    GlcdWrite</span><span style="color:#900000">(</span><span style="color:#000000"> LCD_COM, </span><span style="color:#ff0000">0x0C</span><span style="color:#000000"> </span><span style="color:#900000">)</span></div>
<div style="position:absolute;left:4.5px;top:507.23px;height:16px;line-height:16px;font-family:'Liberation Mono', monospace;font-size:11.6px;white-space:pre;transform:scaleY(1.26);transform-origin:0 7.27px"><span style="color:#000080;font-weight:700">End</span><span style="color:#000000"> </span><span style="color:#000080;font-weight:700">Sub</span></div>
<div style="position:absolute;left:4.5px;top:541.03px;height:16px;line-height:16px;font-family:'Liberation Mono', monospace;font-size:11.6px;white-space:pre;transform:scaleY(1.26);transform-origin:0 7.27px"><span style="color:#000080;font-weight:700">Sub</span><span style="color:#000000"> GlcdWrite</span><span style="color:#900000">(</span><span style="color:#000000"> Glcdcomdat, Glcddat </span><span style="color:#900000">)</span></div>
<div style="position:absolute;left:4.5px;top:574.83px;height:16px;line-height:16px;font-family:'Liberation Mono', monospace;font-size:11.6px;white-space:pre;transform:scaleY(1.26);transform-origin:0 7.27px"><span style="color:#000000">    </span><span style="color:#000080;font-weight:700">if</span><span style="color:#000000"> Glcdcomdat</span><span style="color:#900000;font-weight:700">=</span><span style="color:#ff0000">1</span><span style="color:#000000"> </span><span style="color:#000080;font-weight:700">then</span><span style="color:#000000">                                           </span><span style="color:#00a050;font-style:italic">&#x27; Check</span></div>
<div style="position:absolute;left:4.5px;top:591.73px;height:16px;line-height:16px;font-family:'Liberation Mono', monospace;font-size:11.6px;white-space:pre;transform:scaleY(1.26);transform-origin:0 7.27px"><span style="color:#000000">        </span><span style="color:#000080;font-weight:700">Set</span><span style="color:#000000"> GLCD_DC </span><span style="color:#0000c8;font-weight:700">On</span></div>
<div style="position:absolute;left:4.5px;top:608.63px;height:16px;line-height:16px;font-family:'Liberation Mono', monospace;font-size:11.6px;white-space:pre;transform:scaleY(1.26);transform-origin:0 7.27px"><span style="color:#000000">    </span><span style="color:#000080;font-weight:700">else</span></div>
<div style="position:absolute;left:4.5px;top:625.53px;height:16px;line-height:16px;font-family:'Liberation Mono', monospace;font-size:11.6px;white-space:pre;transform:scaleY(1.26);transform-origin:0 7.27px"><span style="color:#000000">        </span><span style="color:#000080;font-weight:700">Set</span><span style="color:#000000"> GLCD_DC </span><span style="color:#0000c8;font-weight:700">Off</span></div>
<div style="position:absolute;left:4.5px;top:642.43px;height:16px;line-height:16px;font-family:'Liberation Mono', monospace;font-size:11.6px;white-space:pre;transform:scaleY(1.26);transform-origin:0 7.27px"><span style="color:#000000">    </span><span style="color:#000080;font-weight:700">end if</span></div>
<div style="position:absolute;left:4.5px;top:659.33px;height:16px;line-height:16px;font-family:'Liberation Mono', monospace;font-size:11.6px;white-space:pre;transform:scaleY(1.26);transform-origin:0 7.27px"><span style="color:#000000">    </span><span style="color:#000080;font-weight:700">repeat</span><span style="color:#000000"> </span><span style="color:#ff0000">8</span><span style="color:#000000">                                          </span><span style="color:#00a050;font-style:italic">&#x27; Send byte to LCD</span></div>
<div style="position:absolute;left:4.5px;top:676.23px;height:16px;line-height:16px;font-family:'Liberation Mono', monospace;font-size:11.6px;white-space:pre;transform:scaleY(1.26);transform-origin:0 7.27px"><span style="color:#000000">        </span><span style="color:#000080;font-weight:700">Set</span><span style="color:#000000"> GLCD_SCLK </span><span style="color:#0000c8;font-weight:700">Off</span></div>
</div>
<div style="position:absolute;left:2021px;top:94px;width:39px;height:684px;overflow:hidden">
<div style="position:absolute;right:0.5px;top:7.23px;height:16px;line-height:16px;font-family:'Liberation Mono', monospace;font-size:11.6px;color:#000;white-space:pre;transform:scaleY(1.26);transform-origin:0 7.27px">1</div>
<div style="position:absolute;right:0.5px;top:23.37px;height:16px;line-height:16px;font-family:'Liberation Mono', monospace;font-size:11.6px;color:#000;white-space:pre;transform:scaleY(1.26);transform-origin:0 7.27px">2</div>
<div style="position:absolute;right:0.5px;top:39.51px;height:16px;line-height:16px;font-family:'Liberation Mono', monospace;font-size:11.6px;color:#000;white-space:pre;transform:scaleY(1.26);transform-origin:0 7.27px">3</div>
<div style="position:absolute;right:0.5px;top:55.65px;height:16px;line-height:16px;font-family:'Liberation Mono', monospace;font-size:11.6px;color:#000;white-space:pre;transform:scaleY(1.26);transform-origin:0 7.27px">4</div>
<div style="position:absolute;right:0.5px;top:71.79px;height:16px;line-height:16px;font-family:'Liberation Mono', monospace;font-size:11.6px;color:#000;white-space:pre;transform:scaleY(1.26);transform-origin:0 7.27px">5</div>
<div style="position:absolute;right:0.5px;top:87.93px;height:16px;line-height:16px;font-family:'Liberation Mono', monospace;font-size:11.6px;color:#000;white-space:pre;transform:scaleY(1.26);transform-origin:0 7.27px">6</div>
<div style="position:absolute;right:0.5px;top:104.07px;height:16px;line-height:16px;font-family:'Liberation Mono', monospace;font-size:11.6px;color:#000;white-space:pre;transform:scaleY(1.26);transform-origin:0 7.27px">7</div>
<div style="position:absolute;right:0.5px;top:120.21px;height:16px;line-height:16px;font-family:'Liberation Mono', monospace;font-size:11.6px;color:#000;white-space:pre;transform:scaleY(1.26);transform-origin:0 7.27px">8</div>
<div style="position:absolute;right:0.5px;top:136.35px;height:16px;line-height:16px;font-family:'Liberation Mono', monospace;font-size:11.6px;color:#000;white-space:pre;transform:scaleY(1.26);transform-origin:0 7.27px">9</div>
<div style="position:absolute;right:0.5px;top:152.33px;height:16px;line-height:16px;font-family:'Liberation Mono', monospace;font-size:11.6px;color:#000;white-space:pre;transform:scaleY(1.26);transform-origin:0 7.27px">10</div>
<div style="position:absolute;right:0.5px;top:169.23px;height:16px;line-height:16px;font-family:'Liberation Mono', monospace;font-size:11.6px;color:#000;white-space:pre;transform:scaleY(1.26);transform-origin:0 7.27px">11</div>
<div style="position:absolute;right:0.5px;top:186.13px;height:16px;line-height:16px;font-family:'Liberation Mono', monospace;font-size:11.6px;color:#000;white-space:pre;transform:scaleY(1.26);transform-origin:0 7.27px">12</div>
<div style="position:absolute;right:0.5px;top:203.03px;height:16px;line-height:16px;font-family:'Liberation Mono', monospace;font-size:11.6px;color:#000;white-space:pre;transform:scaleY(1.26);transform-origin:0 7.27px">13</div>
<div style="position:absolute;right:0.5px;top:219.93px;height:16px;line-height:16px;font-family:'Liberation Mono', monospace;font-size:11.6px;color:#000;white-space:pre;transform:scaleY(1.26);transform-origin:0 7.27px">14</div>
<div style="position:absolute;right:0.5px;top:236.83px;height:16px;line-height:16px;font-family:'Liberation Mono', monospace;font-size:11.6px;color:#000;white-space:pre;transform:scaleY(1.26);transform-origin:0 7.27px">15</div>
<div style="position:absolute;right:0.5px;top:253.73px;height:16px;line-height:16px;font-family:'Liberation Mono', monospace;font-size:11.6px;color:#000;white-space:pre;transform:scaleY(1.26);transform-origin:0 7.27px">16</div>
<div style="position:absolute;right:0.5px;top:270.63px;height:16px;line-height:16px;font-family:'Liberation Mono', monospace;font-size:11.6px;color:#000;white-space:pre;transform:scaleY(1.26);transform-origin:0 7.27px">17</div>
<div style="position:absolute;right:0.5px;top:287.53px;height:16px;line-height:16px;font-family:'Liberation Mono', monospace;font-size:11.6px;color:#000;white-space:pre;transform:scaleY(1.26);transform-origin:0 7.27px">18</div>
<div style="position:absolute;right:0.5px;top:304.43px;height:16px;line-height:16px;font-family:'Liberation Mono', monospace;font-size:11.6px;color:#000;white-space:pre;transform:scaleY(1.26);transform-origin:0 7.27px">19</div>
<div style="position:absolute;right:0.5px;top:321.33px;height:16px;line-height:16px;font-family:'Liberation Mono', monospace;font-size:11.6px;color:#000;white-space:pre;transform:scaleY(1.26);transform-origin:0 7.27px">20</div>
<div style="position:absolute;right:0.5px;top:338.23px;height:16px;line-height:16px;font-family:'Liberation Mono', monospace;font-size:11.6px;color:#000;white-space:pre;transform:scaleY(1.26);transform-origin:0 7.27px">21</div>
<div style="position:absolute;right:0.5px;top:355.13px;height:16px;line-height:16px;font-family:'Liberation Mono', monospace;font-size:11.6px;color:#000;white-space:pre;transform:scaleY(1.26);transform-origin:0 7.27px">22</div>
<div style="position:absolute;right:0.5px;top:372.03px;height:16px;line-height:16px;font-family:'Liberation Mono', monospace;font-size:11.6px;color:#000;white-space:pre;transform:scaleY(1.26);transform-origin:0 7.27px">23</div>
<div style="position:absolute;right:0.5px;top:388.93px;height:16px;line-height:16px;font-family:'Liberation Mono', monospace;font-size:11.6px;color:#000;white-space:pre;transform:scaleY(1.26);transform-origin:0 7.27px">24</div>
<div style="position:absolute;right:0.5px;top:405.83px;height:16px;line-height:16px;font-family:'Liberation Mono', monospace;font-size:11.6px;color:#000;white-space:pre;transform:scaleY(1.26);transform-origin:0 7.27px">25</div>
<div style="position:absolute;right:0.5px;top:422.73px;height:16px;line-height:16px;font-family:'Liberation Mono', monospace;font-size:11.6px;color:#000;white-space:pre;transform:scaleY(1.26);transform-origin:0 7.27px">26</div>
<div style="position:absolute;right:0.5px;top:439.63px;height:16px;line-height:16px;font-family:'Liberation Mono', monospace;font-size:11.6px;color:#000;white-space:pre;transform:scaleY(1.26);transform-origin:0 7.27px">27</div>
<div style="position:absolute;right:0.5px;top:456.53px;height:16px;line-height:16px;font-family:'Liberation Mono', monospace;font-size:11.6px;color:#000;white-space:pre;transform:scaleY(1.26);transform-origin:0 7.27px">28</div>
<div style="position:absolute;right:0.5px;top:473.43px;height:16px;line-height:16px;font-family:'Liberation Mono', monospace;font-size:11.6px;color:#000;white-space:pre;transform:scaleY(1.26);transform-origin:0 7.27px">29</div>
<div style="position:absolute;right:0.5px;top:490.33px;height:16px;line-height:16px;font-family:'Liberation Mono', monospace;font-size:11.6px;color:#000;white-space:pre;transform:scaleY(1.26);transform-origin:0 7.27px">30</div>
<div style="position:absolute;right:0.5px;top:507.23px;height:16px;line-height:16px;font-family:'Liberation Mono', monospace;font-size:11.6px;color:#000;white-space:pre;transform:scaleY(1.26);transform-origin:0 7.27px">31</div>
<div style="position:absolute;right:0.5px;top:524.13px;height:16px;line-height:16px;font-family:'Liberation Mono', monospace;font-size:11.6px;color:#000;white-space:pre;transform:scaleY(1.26);transform-origin:0 7.27px">32</div>
<div style="position:absolute;right:0.5px;top:541.03px;height:16px;line-height:16px;font-family:'Liberation Mono', monospace;font-size:11.6px;color:#000;white-space:pre;transform:scaleY(1.26);transform-origin:0 7.27px">33</div>
<div style="position:absolute;right:0.5px;top:557.93px;height:16px;line-height:16px;font-family:'Liberation Mono', monospace;font-size:11.6px;color:#000;white-space:pre;transform:scaleY(1.26);transform-origin:0 7.27px">34</div>
<div style="position:absolute;right:0.5px;top:574.83px;height:16px;line-height:16px;font-family:'Liberation Mono', monospace;font-size:11.6px;color:#000;white-space:pre;transform:scaleY(1.26);transform-origin:0 7.27px">35</div>
<div style="position:absolute;right:0.5px;top:591.73px;height:16px;line-height:16px;font-family:'Liberation Mono', monospace;font-size:11.6px;color:#000;white-space:pre;transform:scaleY(1.26);transform-origin:0 7.27px">36</div>
<div style="position:absolute;right:0.5px;top:608.63px;height:16px;line-height:16px;font-family:'Liberation Mono', monospace;font-size:11.6px;color:#000;white-space:pre;transform:scaleY(1.26);transform-origin:0 7.27px">37</div>
<div style="position:absolute;right:0.5px;top:625.53px;height:16px;line-height:16px;font-family:'Liberation Mono', monospace;font-size:11.6px;color:#000;white-space:pre;transform:scaleY(1.26);transform-origin:0 7.27px">38</div>
<div style="position:absolute;right:0.5px;top:642.43px;height:16px;line-height:16px;font-family:'Liberation Mono', monospace;font-size:11.6px;color:#000;white-space:pre;transform:scaleY(1.26);transform-origin:0 7.27px">39</div>
<div style="position:absolute;right:0.5px;top:659.33px;height:16px;line-height:16px;font-family:'Liberation Mono', monospace;font-size:11.6px;color:#000;white-space:pre;transform:scaleY(1.26);transform-origin:0 7.27px">40</div>
<div style="position:absolute;right:0.5px;top:676.23px;height:16px;line-height:16px;font-family:'Liberation Mono', monospace;font-size:11.6px;color:#000;white-space:pre;transform:scaleY(1.26);transform-origin:0 7.27px">41</div>
</div>
<div style="position:absolute;left:2543px;top:94px;width:15px;height:684px;background:#e3e3e3;border-left:1px solid #cfcfcf;box-sizing:border-box"></div>
<div style="position:absolute;left:2543px;top:94px;width:15px;height:13px;background:linear-gradient(#fff,#ededed);border:1px solid #cfcfcf;box-sizing:border-box"></div>
<svg style="position:absolute;left:2546px;top:97px" width="9" height="6"><path d="M0.5 5L4.5 0.5L8.5 5Z" fill="#555"/></svg>
<div style="position:absolute;left:2543px;top:107px;width:15px;height:96px;background:linear-gradient(to right,#fff,#f0f0f0);border:1px solid #cfcfcf;box-sizing:border-box"></div>
<div style="position:absolute;left:2543px;top:765px;width:15px;height:13px;background:linear-gradient(#fff,#ededed);border:1px solid #cfcfcf;box-sizing:border-box"></div>
<svg style="position:absolute;left:2546px;top:769px" width="9" height="6"><path d="M0.5 0.5L4.5 5L8.5 0.5Z" fill="#555"/></svg>
<div style="position:absolute;left:2021px;top:778px;width:522px;height:15px;background:#e3e3e3;border-top:1px solid #cfcfcf;box-sizing:border-box"></div>
<div style="position:absolute;left:2021px;top:778px;width:14px;height:15px;background:linear-gradient(#fff,#ededed);border:1px solid #cfcfcf;box-sizing:border-box"></div>
<svg style="position:absolute;left:2025px;top:781px" width="6" height="9"><path d="M5 0.5L0.5 4.5L5 8.5Z" fill="#555"/></svg>
<div style="position:absolute;left:2035px;top:778px;width:441px;height:15px;background:linear-gradient(#fff,#f2f2f2);border:1px solid #cfcfcf;box-sizing:border-box"></div>
<div style="position:absolute;left:2529px;top:778px;width:14px;height:15px;background:linear-gradient(#fff,#ededed);border:1px solid #cfcfcf;box-sizing:border-box"></div>
<svg style="position:absolute;left:2533px;top:781px" width="6" height="9"><path d="M0.5 0.5L5 4.5L0.5 8.5Z" fill="#555"/></svg>
<div style="position:absolute;left:2543px;top:778px;width:15px;height:15px;background:#f0f0f0;border:1px solid #d8d8d8;box-sizing:border-box"></div>
<div style="position:absolute;left:2284px;top:796px;width:1px;height:1px;background:#a0a0a0"></div>
<div style="position:absolute;left:2286px;top:796px;width:1px;height:1px;background:#a0a0a0"></div>
<div style="position:absolute;left:2288px;top:796px;width:1px;height:1px;background:#a0a0a0"></div>
<div style="position:absolute;left:2290px;top:796px;width:1px;height:1px;background:#a0a0a0"></div>
<div style="position:absolute;left:2292px;top:796px;width:1px;height:1px;background:#a0a0a0"></div>
<div style="position:absolute;left:2294px;top:796px;width:1px;height:1px;background:#a0a0a0"></div>
<div style="position:absolute;left:2019px;top:799px;width:541px;height:244px;background:#221d3c;border-top:1px solid #c8c8c8;border-left:1px solid #c8c8c8;box-sizing:border-box"></div>
<div style="position:absolute;left:2029.4px;top:800.83px;height:15px;line-height:15px;font-family:'Liberation Mono', monospace;font-size:11.58px;font-weight:400;color:#e2dcc0;white-space:pre;transform:scaleY(1.14);transform-origin:0 6.77px;"><span style="color:#e2dcc0">-------------------------------------------------------</span></div>
<div style="position:absolute;left:2029.4px;top:818.03px;height:15px;line-height:15px;font-family:'Liberation Mono', monospace;font-size:11.58px;font-weight:400;color:#e2dcc0;white-space:pre;transform:scaleY(1.14);transform-origin:0 6.77px;"><span style="color:#e2dcc0"> Файл: D:</span><span style="color:#6cbc5c">/SimulIDE_1</span><span style="color:#e2dcc0">.</span><span style="color:#8c8cff">1</span><span style="color:#e2dcc0">.</span><span style="color:#8c8cff">0</span><span style="color:#6cbc5c">-RC1_Win64/examples/Micro/Avr/mega168/</span></div>
<div style="position:absolute;left:2029.4px;top:834.03px;height:15px;line-height:15px;font-family:'Liberation Mono', monospace;font-size:11.58px;font-weight:400;color:#e2dcc0;white-space:pre;transform:scaleY(1.14);transform-origin:0 6.77px;"><span style="color:#6cbc5c">m168_glcd8544/gcb_code/m168_glcd8544.gcb</span></div>
<div style="position:absolute;left:2029.4px;top:866.03px;height:15px;line-height:15px;font-family:'Liberation Mono', monospace;font-size:11.58px;font-weight:400;color:#e2dcc0;white-space:pre;transform:scaleY(1.14);transform-origin:0 6.77px;"><span style="color:#e2dcc0">GcBasic Компилятор успешно загружен.</span></div>
<div style="position:absolute;left:2029.4px;top:896.33px;height:15px;line-height:15px;font-family:'Liberation Mono', monospace;font-size:11.58px;font-weight:400;color:#e2dcc0;white-space:pre;transform:scaleY(1.14);transform-origin:0 6.77px;"><span style="color:#e2dcc0">-------------------------------------------------------</span></div>
<div style="position:absolute;left:2029.4px;top:912.33px;height:15px;line-height:15px;font-family:'Liberation Mono', monospace;font-size:11.58px;font-weight:400;color:#e2dcc0;white-space:pre;transform:scaleY(1.14);transform-origin:0 6.77px;"><span style="color:#e2dcc0">-------------------------------------------------------</span></div>
<div style="position:absolute;left:2029.4px;top:930.03px;height:15px;line-height:15px;font-family:'Liberation Mono', monospace;font-size:11.58px;font-weight:400;color:#e2dcc0;white-space:pre;transform:scaleY(1.14);transform-origin:0 6.77px;"><span style="color:#e2dcc0"> Файл: D:</span><span style="color:#6cbc5c">/SimulIDE_1</span><span style="color:#e2dcc0">.</span><span style="color:#8c8cff">1</span><span style="color:#e2dcc0">.</span><span style="color:#8c8cff">0</span><span style="color:#6cbc5c">-RC1_Win64/examples/Micro/Avr/mega168/</span></div>
<div style="position:absolute;left:2029.4px;top:946.03px;height:15px;line-height:15px;font-family:'Liberation Mono', monospace;font-size:11.58px;font-weight:400;color:#e2dcc0;white-space:pre;transform:scaleY(1.14);transform-origin:0 6.77px;"><span style="color:#6cbc5c">m168_glcd8544/gcb_code/glcd8544.gcb</span></div>
<div style="position:absolute;left:2029.4px;top:978.03px;height:15px;line-height:15px;font-family:'Liberation Mono', monospace;font-size:11.58px;font-weight:400;color:#e2dcc0;white-space:pre;transform:scaleY(1.14);transform-origin:0 6.77px;"><span style="color:#e2dcc0">GcBasic Компилятор успешно загружен.</span></div>
<div style="position:absolute;left:2029.4px;top:1008.33px;height:15px;line-height:15px;font-family:'Liberation Mono', monospace;font-size:11.58px;font-weight:400;color:#e2dcc0;white-space:pre;transform:scaleY(1.14);transform-origin:0 6.77px;"><span style="color:#e2dcc0">-------------------------------------------------------</span></div>
<div style="position:absolute;left:2545px;top:800px;width:15px;height:243px;background:#e3e3e3;border-left:1px solid #cfcfcf;box-sizing:border-box"></div>
<div style="position:absolute;left:2545px;top:800px;width:15px;height:13px;background:linear-gradient(#fff,#ededed);border:1px solid #cfcfcf;box-sizing:border-box"></div>
<svg style="position:absolute;left:2548px;top:803px" width="9" height="6"><path d="M0.5 5L4.5 0.5L8.5 5Z" fill="#555"/></svg>
<div style="position:absolute;left:2545px;top:950px;width:15px;height:68px;background:linear-gradient(to right,#fff,#f0f0f0);border:1px solid #cfcfcf;box-sizing:border-box"></div>
<div style="position:absolute;left:2545px;top:1029px;width:15px;height:14px;background:linear-gradient(#fff,#ededed);border:1px solid #cfcfcf;box-sizing:border-box"></div>
<svg style="position:absolute;left:2548px;top:1033px" width="9" height="6"><path d="M0.5 0.5L4.5 5L8.5 0.5Z" fill="#555"/></svg>
<div style="position:absolute;left:802px;top:951px;width:1px;height:1px;background:#a0a0a0"></div>
<div style="position:absolute;left:802px;top:953px;width:1px;height:1px;background:#a0a0a0"></div>
<div style="position:absolute;left:802px;top:955px;width:1px;height:1px;background:#a0a0a0"></div>
<div style="position:absolute;left:802px;top:957px;width:1px;height:1px;background:#a0a0a0"></div>
<div style="position:absolute;left:802px;top:959px;width:1px;height:1px;background:#a0a0a0"></div>
<div style="position:absolute;left:802px;top:961px;width:1px;height:1px;background:#a0a0a0"></div>
<div style="position:absolute;left:802px;top:963px;width:1px;height:1px;background:#a0a0a0"></div>
<div style="position:absolute;left:802px;top:965px;width:1px;height:1px;background:#a0a0a0"></div>
<div style="position:absolute;left:386px;top:530px;width:1px;height:1px;background:#a0a0a0"></div>
<div style="position:absolute;left:386px;top:532px;width:1px;height:1px;background:#a0a0a0"></div>
<div style="position:absolute;left:386px;top:534px;width:1px;height:1px;background:#a0a0a0"></div>
<div style="position:absolute;left:386px;top:536px;width:1px;height:1px;background:#a0a0a0"></div>
<div style="position:absolute;left:386px;top:538px;width:1px;height:1px;background:#a0a0a0"></div>
<div style="position:absolute;left:386px;top:540px;width:1px;height:1px;background:#a0a0a0"></div>
<div style="position:absolute;left:386px;top:542px;width:1px;height:1px;background:#a0a0a0"></div>
<div style="position:absolute;left:386px;top:544px;width:1px;height:1px;background:#a0a0a0"></div>
<div style="position:absolute;left:2017px;top:528px;width:1px;height:1px;background:#a0a0a0"></div>
<div style="position:absolute;left:2017px;top:530px;width:1px;height:1px;background:#a0a0a0"></div>
<div style="position:absolute;left:2017px;top:532px;width:1px;height:1px;background:#a0a0a0"></div>
<div style="position:absolute;left:2017px;top:534px;width:1px;height:1px;background:#a0a0a0"></div>
<div style="position:absolute;left:2017px;top:536px;width:1px;height:1px;background:#a0a0a0"></div>
<div style="position:absolute;left:2017px;top:538px;width:1px;height:1px;background:#a0a0a0"></div>
<div style="position:absolute;left:2017px;top:540px;width:1px;height:1px;background:#a0a0a0"></div>
<div style="position:absolute;left:2017px;top:542px;width:1px;height:1px;background:#a0a0a0"></div></body></html>
